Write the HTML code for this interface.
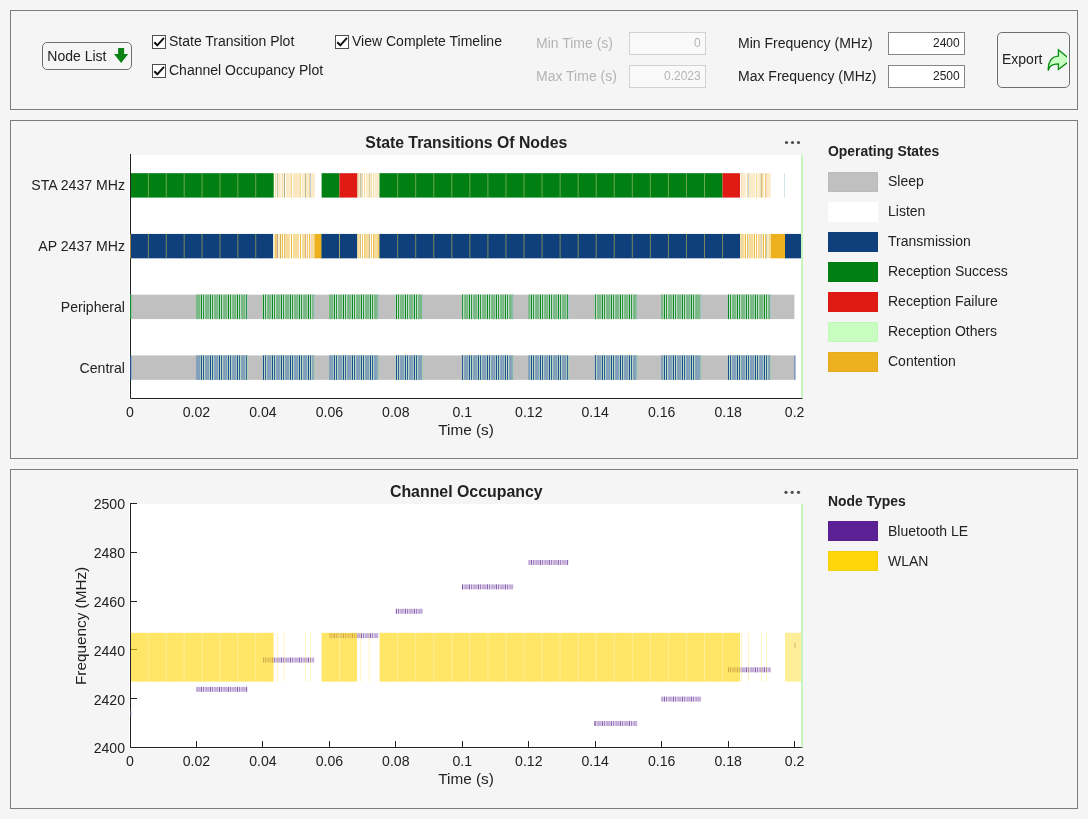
<!DOCTYPE html>
<html lang="en"><head><meta charset="utf-8"><title>Coexistence Visualization</title>
<style>
html,body{margin:0;padding:0;}
body{width:1088px;height:819px;background:#F5F5F5;font-family:"Liberation Sans", sans-serif;color:#212121;position:relative;overflow:hidden;}
.panel{position:absolute;left:10px;width:1066px;border:1px solid #7D7D7D;}
#p1{top:10px;height:98px;}
#p2{top:120px;height:337px;}
#p3{top:469px;height:338px;}
#wrap{position:absolute;left:0;top:0;width:1088px;height:819px;will-change:transform;}
.abs{position:absolute;}
.btn{position:absolute;box-sizing:border-box;border:1px solid #6E6E6E;border-radius:5px;font-size:14px;color:#212121;}
.lbl{position:absolute;font-size:14px;line-height:16px;white-space:nowrap;color:#212121;}
.dis{color:#B4B4B4;}
.cb{position:absolute;box-sizing:border-box;width:14px;height:14px;border:1px solid #4D4D4D;background:#fff;}
.cb svg{position:absolute;left:-1px;top:-1px;}
.inp{position:absolute;box-sizing:border-box;width:77px;height:23px;border:1px solid #858585;background:#fff;font-size:12px;line-height:21px;text-align:right;padding-right:4.3px;color:#212121;}
.inp.d{border-color:#D2D2D2;background:#F9F9F9;color:#B4B4B4;}
svg text{font-family:"Liberation Sans", sans-serif;}
svg.plot{position:absolute;left:0;top:0;}
</style></head><body>
<div id="wrap">
<div class="panel" id="p1"></div>
<div class="panel" id="p2"></div>
<div class="panel" id="p3"></div>

<div class="btn" style="left:42px;top:42px;width:90px;height:28px;"><span class="abs" style="left:4.3px;top:5px;line-height:16px;">Node List</span>
<svg class="abs" style="left:69px;top:4px" width="18" height="18" viewBox="112 47 18 18"><path d="M118.1 48 H124.1 V54.1 H128.2 L121.1 63 L114 54.1 H118.1 Z" fill="#0A8214"/></svg></div>

<div class="cb" style="left:152px;top:35px"><svg width="14" height="14" viewBox="152 35 14 14"><path d="M154.3 42.2 L157.3 45.3 L164 37.8" fill="none" stroke="#111" stroke-width="2"/></svg></div>
<div class="lbl" style="left:169px;top:33px">State Transition Plot</div>
<div class="cb" style="left:152px;top:64px"><svg width="14" height="14" viewBox="152 35 14 14"><path d="M154.3 42.2 L157.3 45.3 L164 37.8" fill="none" stroke="#111" stroke-width="2"/></svg></div>
<div class="lbl" style="left:169px;top:62px">Channel Occupancy Plot</div>
<div class="cb" style="left:335px;top:35px"><svg width="14" height="14" viewBox="152 35 14 14"><path d="M154.3 42.2 L157.3 45.3 L164 37.8" fill="none" stroke="#111" stroke-width="2"/></svg></div>
<div class="lbl" style="left:352px;top:33px">View Complete Timeline</div>

<div class="lbl dis" style="left:536px;top:35px">Min Time (s)</div>
<div class="lbl dis" style="left:536px;top:68px">Max Time (s)</div>
<div class="inp d" style="left:629px;top:32px">0</div>
<div class="inp d" style="left:629px;top:65px">0.2023</div>
<div class="lbl" style="left:738px;top:35px">Min Frequency (MHz)</div>
<div class="lbl" style="left:738px;top:68px">Max Frequency (MHz)</div>
<div class="inp" style="left:888px;top:32px">2400</div>
<div class="inp" style="left:888px;top:65px">2500</div>

<div class="btn" style="left:997px;top:32px;width:73px;height:56px;"><span class="abs" style="left:4px;top:17.5px;line-height:16px;">Export</span>
<svg class="abs" style="left:49px;top:15px" width="20" height="26" viewBox="1047 48 20 26"><path d="M1058.4 49.8 L1070.8 59.9 L1058.4 69.4 V63.9 C1053 63.9 1049 66 1048.3 70.7 C1047.6 62 1051.5 56.6 1058.4 56.2 Z" fill="#C8FFC0" stroke="#078A14" stroke-width="1.3" stroke-linejoin="miter"/></svg></div>

<svg class="plot" width="1088" height="819" viewBox="0 0 1088 819">
<defs>
<pattern id="pg" width="3" height="30" patternUnits="userSpaceOnUse" x="195.9">
<rect width="3" height="30" fill="#86C08E"/><rect x="0.2" width="0.9" height="30" fill="#0E8420"/><rect x="1.1" width="0.6" height="30" fill="#CFE8D0"/></pattern>
<pattern id="pb" width="3" height="30" patternUnits="userSpaceOnUse" x="195.9">
<rect width="3" height="30" fill="#8AA6C6"/><rect x="0.2" width="0.9" height="30" fill="#134484"/><rect x="1.1" width="0.6" height="30" fill="#C4E4C8"/></pattern>
<pattern id="pp" width="2" height="10" patternUnits="userSpaceOnUse" x="195.9">
<rect width="2" height="10" fill="#A87CD0"/><rect x="0" width="0.8" height="10" fill="#6A30A8"/></pattern>
</defs>
<rect x="129.00" y="155.00" width="674.00" height="244.50" fill="#FFFFFF"/>
<rect x="130.50" y="173.18" width="143.20" height="24.40" fill="#008012"/>
<rect x="147.89" y="173.18" width="1.00" height="24.40" fill="#6CA84C"/>
<rect x="165.78" y="173.18" width="1.00" height="24.40" fill="#6CA84C"/>
<rect x="183.67" y="173.18" width="1.00" height="24.40" fill="#6CA84C"/>
<rect x="201.56" y="173.18" width="1.00" height="24.40" fill="#6CA84C"/>
<rect x="219.45" y="173.18" width="1.00" height="24.40" fill="#6CA84C"/>
<rect x="237.34" y="173.18" width="1.00" height="24.40" fill="#6CA84C"/>
<rect x="255.23" y="173.18" width="1.00" height="24.40" fill="#6CA84C"/>
<rect x="274.90" y="173.18" width="1.10" height="24.40" fill="#F8DFA8"/>
<rect x="276.80" y="173.18" width="1.40" height="24.40" fill="#C4C8A4"/>
<rect x="278.20" y="173.18" width="2.60" height="24.40" fill="#FBEBC8"/>
<rect x="281.80" y="173.18" width="1.10" height="24.40" fill="#F6D88F"/>
<rect x="283.90" y="173.18" width="1.10" height="24.40" fill="#B0AE78"/>
<rect x="285.90" y="173.18" width="4.70" height="24.40" fill="#FBEBC8"/>
<rect x="290.60" y="173.18" width="1.40" height="24.40" fill="#F6D88F"/>
<rect x="293.00" y="173.18" width="6.70" height="24.40" fill="#FAE8C0"/>
<rect x="299.70" y="173.18" width="1.30" height="24.40" fill="#F6D88F"/>
<rect x="302.00" y="173.18" width="3.00" height="24.40" fill="#FBEBC8"/>
<rect x="305.00" y="173.18" width="1.00" height="24.40" fill="#B8BC98"/>
<rect x="306.00" y="173.18" width="2.80" height="24.40" fill="#FBEBC8"/>
<rect x="308.80" y="173.18" width="1.10" height="24.40" fill="#F6D88F"/>
<rect x="309.90" y="173.18" width="1.10" height="24.40" fill="#BCCCDC"/>
<rect x="311.00" y="173.18" width="3.90" height="24.40" fill="#FBEBC8"/>
<rect x="357.00" y="173.18" width="1.80" height="24.40" fill="#E0D0A8"/>
<rect x="358.80" y="173.18" width="1.20" height="24.40" fill="#FBEBC8"/>
<rect x="360.00" y="173.18" width="1.00" height="24.40" fill="#C8C8A0"/>
<rect x="361.00" y="173.18" width="1.00" height="24.40" fill="#D8D8D0"/>
<rect x="362.00" y="173.18" width="0.80" height="24.40" fill="#F6D88F"/>
<rect x="364.10" y="173.18" width="0.90" height="24.40" fill="#F6D88F"/>
<rect x="365.80" y="173.18" width="3.20" height="24.40" fill="#FBEBC8"/>
<rect x="369.00" y="173.18" width="0.90" height="24.40" fill="#C8D0A0"/>
<rect x="369.90" y="173.18" width="1.00" height="24.40" fill="#FBEBC8"/>
<rect x="370.90" y="173.18" width="0.90" height="24.40" fill="#F6D88F"/>
<rect x="373.10" y="173.18" width="0.80" height="24.40" fill="#F6D88F"/>
<rect x="374.00" y="173.18" width="1.00" height="24.40" fill="#FEF6E4"/>
<rect x="375.00" y="173.18" width="4.00" height="24.40" fill="#FBEBC8"/>
<rect x="379.00" y="173.18" width="0.70" height="24.40" fill="#B0DCA8"/>
<rect x="741.10" y="173.18" width="0.80" height="24.40" fill="#F8D0A0"/>
<rect x="742.00" y="173.18" width="3.60" height="24.40" fill="#FBEBC8"/>
<rect x="746.90" y="173.18" width="1.00" height="24.40" fill="#F6D88F"/>
<rect x="747.90" y="173.18" width="1.10" height="24.40" fill="#C8D8D8"/>
<rect x="749.00" y="173.18" width="5.80" height="24.40" fill="#FBEBC8"/>
<rect x="755.90" y="173.18" width="1.10" height="24.40" fill="#F6D88F"/>
<rect x="757.00" y="173.18" width="1.20" height="24.40" fill="#FEF6E4"/>
<rect x="758.20" y="173.18" width="2.50" height="24.40" fill="#FBEBC8"/>
<rect x="760.70" y="173.18" width="1.30" height="24.40" fill="#D0C080"/>
<rect x="762.00" y="173.18" width="1.60" height="24.40" fill="#F8E0A8"/>
<rect x="764.90" y="173.18" width="1.30" height="24.40" fill="#F6D080"/>
<rect x="766.20" y="173.18" width="0.80" height="24.40" fill="#F8D0C0"/>
<rect x="767.00" y="173.18" width="3.70" height="24.40" fill="#FBEBC8"/>
<rect x="784.00" y="173.18" width="1.00" height="24.40" fill="#D8E4EC"/>
<rect x="321.60" y="173.18" width="17.90" height="24.40" fill="#008012"/>
<rect x="339.50" y="173.18" width="17.60" height="24.40" fill="#E01B14"/>
<rect x="379.60" y="173.18" width="342.95" height="24.40" fill="#008012"/>
<rect x="397.15" y="173.18" width="1.00" height="24.40" fill="#6CA84C"/>
<rect x="415.20" y="173.18" width="1.00" height="24.40" fill="#6CA84C"/>
<rect x="433.25" y="173.18" width="1.00" height="24.40" fill="#6CA84C"/>
<rect x="451.30" y="173.18" width="1.00" height="24.40" fill="#6CA84C"/>
<rect x="469.35" y="173.18" width="1.00" height="24.40" fill="#6CA84C"/>
<rect x="487.40" y="173.18" width="1.00" height="24.40" fill="#6CA84C"/>
<rect x="505.45" y="173.18" width="1.00" height="24.40" fill="#6CA84C"/>
<rect x="523.50" y="173.18" width="1.00" height="24.40" fill="#6CA84C"/>
<rect x="541.55" y="173.18" width="1.00" height="24.40" fill="#6CA84C"/>
<rect x="559.60" y="173.18" width="1.00" height="24.40" fill="#6CA84C"/>
<rect x="577.65" y="173.18" width="1.00" height="24.40" fill="#6CA84C"/>
<rect x="595.70" y="173.18" width="1.00" height="24.40" fill="#6CA84C"/>
<rect x="613.75" y="173.18" width="1.00" height="24.40" fill="#6CA84C"/>
<rect x="631.80" y="173.18" width="1.00" height="24.40" fill="#6CA84C"/>
<rect x="649.85" y="173.18" width="1.00" height="24.40" fill="#6CA84C"/>
<rect x="667.90" y="173.18" width="1.00" height="24.40" fill="#6CA84C"/>
<rect x="685.95" y="173.18" width="1.00" height="24.40" fill="#6CA84C"/>
<rect x="704.00" y="173.18" width="1.00" height="24.40" fill="#6CA84C"/>
<rect x="722.55" y="173.18" width="17.45" height="24.40" fill="#E01B14"/>
<rect x="130.50" y="233.93" width="142.80" height="24.40" fill="#10407C"/>
<rect x="147.89" y="233.93" width="1.00" height="24.40" fill="#76885A"/>
<rect x="165.78" y="233.93" width="1.00" height="24.40" fill="#76885A"/>
<rect x="183.67" y="233.93" width="1.00" height="24.40" fill="#76885A"/>
<rect x="201.56" y="233.93" width="1.00" height="24.40" fill="#76885A"/>
<rect x="219.45" y="233.93" width="1.00" height="24.40" fill="#76885A"/>
<rect x="237.34" y="233.93" width="1.00" height="24.40" fill="#76885A"/>
<rect x="255.23" y="233.93" width="1.00" height="24.40" fill="#76885A"/>
<rect x="273.30" y="233.93" width="1.40" height="24.40" fill="#FDF4E0"/>
<rect x="274.70" y="233.93" width="2.10" height="24.40" fill="#F3C860"/>
<rect x="276.80" y="233.93" width="1.10" height="24.40" fill="#C0A080"/>
<rect x="278.00" y="233.93" width="1.90" height="24.40" fill="#FDF0C8"/>
<rect x="279.90" y="233.93" width="1.10" height="24.40" fill="#D8B050"/>
<rect x="281.80" y="233.93" width="1.20" height="24.40" fill="#EFBC44"/>
<rect x="284.00" y="233.93" width="1.10" height="24.40" fill="#E0C070"/>
<rect x="285.10" y="233.93" width="4.70" height="24.40" fill="#F6DC98"/>
<rect x="290.90" y="233.93" width="1.10" height="24.40" fill="#EFBC44"/>
<rect x="293.10" y="233.93" width="5.80" height="24.40" fill="#F6DC98"/>
<rect x="300.00" y="233.93" width="1.00" height="24.40" fill="#EFBC44"/>
<rect x="302.10" y="233.93" width="2.90" height="24.40" fill="#F6DC98"/>
<rect x="305.00" y="233.93" width="1.10" height="24.40" fill="#D8B090"/>
<rect x="306.90" y="233.93" width="0.90" height="24.40" fill="#EFBC44"/>
<rect x="308.90" y="233.93" width="1.00" height="24.40" fill="#EFBC44"/>
<rect x="310.00" y="233.93" width="1.00" height="24.40" fill="#F0E0E0"/>
<rect x="311.00" y="233.93" width="3.80" height="24.40" fill="#F6DC98"/>
<rect x="314.60" y="233.93" width="6.90" height="24.40" fill="#EDB120"/>
<rect x="357.00" y="233.93" width="3.00" height="24.40" fill="#FAE0A0"/>
<rect x="360.00" y="233.93" width="0.90" height="24.40" fill="#D0B878"/>
<rect x="362.00" y="233.93" width="0.80" height="24.40" fill="#EFBC44"/>
<rect x="364.10" y="233.93" width="0.90" height="24.40" fill="#F0C860"/>
<rect x="365.00" y="233.93" width="4.00" height="24.40" fill="#F6DC98"/>
<rect x="369.00" y="233.93" width="0.90" height="24.40" fill="#B8B090"/>
<rect x="370.90" y="233.93" width="0.90" height="24.40" fill="#EFBC44"/>
<rect x="373.10" y="233.93" width="0.90" height="24.40" fill="#EFBC44"/>
<rect x="374.00" y="233.93" width="4.00" height="24.40" fill="#F6DC98"/>
<rect x="378.00" y="233.93" width="1.00" height="24.40" fill="#F8C850"/>
<rect x="379.00" y="233.93" width="0.70" height="24.40" fill="#8C9468"/>
<rect x="740.00" y="233.93" width="1.10" height="24.40" fill="#FBE0A0"/>
<rect x="741.10" y="233.93" width="0.80" height="24.40" fill="#D8C8A0"/>
<rect x="742.00" y="233.93" width="2.00" height="24.40" fill="#F6DC98"/>
<rect x="744.00" y="233.93" width="1.00" height="24.40" fill="#FBEBC0"/>
<rect x="745.00" y="233.93" width="1.00" height="24.40" fill="#EFBC44"/>
<rect x="747.10" y="233.93" width="0.90" height="24.40" fill="#EFBC44"/>
<rect x="748.00" y="233.93" width="1.00" height="24.40" fill="#E0E0D8"/>
<rect x="749.00" y="233.93" width="4.00" height="24.40" fill="#F6DC98"/>
<rect x="753.00" y="233.93" width="1.00" height="24.40" fill="#FBEBC0"/>
<rect x="754.00" y="233.93" width="1.00" height="24.40" fill="#EFBC44"/>
<rect x="756.10" y="233.93" width="0.90" height="24.40" fill="#EFBC44"/>
<rect x="757.00" y="233.93" width="1.00" height="24.40" fill="#FEF6E4"/>
<rect x="758.00" y="233.93" width="2.70" height="24.40" fill="#F6DC98"/>
<rect x="760.70" y="233.93" width="1.20" height="24.40" fill="#D0C8B0"/>
<rect x="761.90" y="233.93" width="1.10" height="24.40" fill="#FBEBC0"/>
<rect x="763.00" y="233.93" width="1.00" height="24.40" fill="#EFBC44"/>
<rect x="765.10" y="233.93" width="1.00" height="24.40" fill="#EFBC44"/>
<rect x="766.10" y="233.93" width="0.90" height="24.40" fill="#C4C4BC"/>
<rect x="767.00" y="233.93" width="2.00" height="24.40" fill="#FAE8B8"/>
<rect x="769.00" y="233.93" width="2.00" height="24.40" fill="#F6DC98"/>
<rect x="771.00" y="233.93" width="14.00" height="24.40" fill="#EDB120"/>
<rect x="321.60" y="233.93" width="35.50" height="24.40" fill="#10407C"/>
<rect x="339.00" y="233.93" width="1.00" height="24.40" fill="#A0A860"/>
<rect x="321.10" y="233.93" width="0.80" height="24.40" fill="#607850"/>
<rect x="379.60" y="233.93" width="360.40" height="24.40" fill="#10407C"/>
<rect x="397.15" y="233.93" width="1.00" height="24.40" fill="#76885A"/>
<rect x="415.20" y="233.93" width="1.00" height="24.40" fill="#76885A"/>
<rect x="433.25" y="233.93" width="1.00" height="24.40" fill="#76885A"/>
<rect x="451.30" y="233.93" width="1.00" height="24.40" fill="#76885A"/>
<rect x="469.35" y="233.93" width="1.00" height="24.40" fill="#76885A"/>
<rect x="487.40" y="233.93" width="1.00" height="24.40" fill="#76885A"/>
<rect x="505.45" y="233.93" width="1.00" height="24.40" fill="#76885A"/>
<rect x="523.50" y="233.93" width="1.00" height="24.40" fill="#76885A"/>
<rect x="541.55" y="233.93" width="1.00" height="24.40" fill="#76885A"/>
<rect x="559.60" y="233.93" width="1.00" height="24.40" fill="#76885A"/>
<rect x="577.65" y="233.93" width="1.00" height="24.40" fill="#76885A"/>
<rect x="595.70" y="233.93" width="1.00" height="24.40" fill="#76885A"/>
<rect x="613.75" y="233.93" width="1.00" height="24.40" fill="#76885A"/>
<rect x="631.80" y="233.93" width="1.00" height="24.40" fill="#76885A"/>
<rect x="649.85" y="233.93" width="1.00" height="24.40" fill="#76885A"/>
<rect x="667.90" y="233.93" width="1.00" height="24.40" fill="#76885A"/>
<rect x="685.95" y="233.93" width="1.00" height="24.40" fill="#76885A"/>
<rect x="704.00" y="233.93" width="1.00" height="24.40" fill="#76885A"/>
<rect x="722.05" y="233.93" width="1.00" height="24.40" fill="#76885A"/>
<rect x="785.00" y="233.93" width="18.00" height="24.40" fill="#10407C"/>
<rect x="131.30" y="294.68" width="663.10" height="24.40" fill="#C0C0C0"/>
<rect x="195.90" y="294.68" width="51.50" height="24.40" fill="#82BC8C"/>
<rect x="197.06" y="294.68" width="0.70" height="24.40" fill="#6EB47C"/>
<rect x="198.86" y="294.68" width="0.70" height="24.40" fill="#6EB47C"/>
<rect x="206.10" y="294.68" width="0.70" height="24.40" fill="#6EB47C"/>
<rect x="207.90" y="294.68" width="0.70" height="24.40" fill="#6EB47C"/>
<rect x="200.50" y="294.68" width="2.20" height="24.40" fill="#D6E8DE"/>
<rect x="202.50" y="294.68" width="2.20" height="24.40" fill="#D6E8DE"/>
<rect x="201.00" y="294.68" width="1.00" height="24.40" fill="#0A8A1E"/>
<rect x="203.00" y="294.68" width="1.00" height="24.40" fill="#2A9638"/>
<rect x="215.14" y="294.68" width="0.70" height="24.40" fill="#6EB47C"/>
<rect x="216.94" y="294.68" width="0.70" height="24.40" fill="#6EB47C"/>
<rect x="209.50" y="294.68" width="2.20" height="24.40" fill="#D6E8DE"/>
<rect x="211.50" y="294.68" width="2.20" height="24.40" fill="#D6E8DE"/>
<rect x="210.00" y="294.68" width="1.00" height="24.40" fill="#0A8A1E"/>
<rect x="212.00" y="294.68" width="1.00" height="24.40" fill="#2A9638"/>
<rect x="224.18" y="294.68" width="0.70" height="24.40" fill="#6EB47C"/>
<rect x="225.98" y="294.68" width="0.70" height="24.40" fill="#6EB47C"/>
<rect x="218.50" y="294.68" width="2.20" height="24.40" fill="#D6E8DE"/>
<rect x="220.50" y="294.68" width="2.20" height="24.40" fill="#D6E8DE"/>
<rect x="219.00" y="294.68" width="1.00" height="24.40" fill="#0A8A1E"/>
<rect x="221.00" y="294.68" width="1.00" height="24.40" fill="#2A9638"/>
<rect x="233.22" y="294.68" width="0.70" height="24.40" fill="#6EB47C"/>
<rect x="235.02" y="294.68" width="0.70" height="24.40" fill="#6EB47C"/>
<rect x="227.50" y="294.68" width="2.20" height="24.40" fill="#D6E8DE"/>
<rect x="229.50" y="294.68" width="2.20" height="24.40" fill="#D6E8DE"/>
<rect x="228.00" y="294.68" width="1.00" height="24.40" fill="#0A8A1E"/>
<rect x="230.00" y="294.68" width="1.00" height="24.40" fill="#2A9638"/>
<rect x="242.26" y="294.68" width="0.70" height="24.40" fill="#6EB47C"/>
<rect x="244.06" y="294.68" width="0.70" height="24.40" fill="#6EB47C"/>
<rect x="236.50" y="294.68" width="2.20" height="24.40" fill="#D6E8DE"/>
<rect x="238.50" y="294.68" width="2.20" height="24.40" fill="#D6E8DE"/>
<rect x="237.00" y="294.68" width="1.00" height="24.40" fill="#0A8A1E"/>
<rect x="239.00" y="294.68" width="1.00" height="24.40" fill="#2A9638"/>
<rect x="245.50" y="294.68" width="1.90" height="24.40" fill="#D6E8DE"/>
<rect x="246.00" y="294.68" width="1.00" height="24.40" fill="#0A8A1E"/>
<rect x="246.80" y="294.68" width="0.90" height="24.40" fill="#B4C4D4"/>
<rect x="262.80" y="294.68" width="51.40" height="24.40" fill="#82BC8C"/>
<rect x="267.90" y="294.68" width="0.70" height="24.40" fill="#6EB47C"/>
<rect x="269.70" y="294.68" width="0.70" height="24.40" fill="#6EB47C"/>
<rect x="262.80" y="294.68" width="1.90" height="24.40" fill="#D6E8DE"/>
<rect x="264.50" y="294.68" width="2.20" height="24.40" fill="#D6E8DE"/>
<rect x="263.00" y="294.68" width="1.00" height="24.40" fill="#0A8A1E"/>
<rect x="265.00" y="294.68" width="1.00" height="24.40" fill="#2A9638"/>
<rect x="276.94" y="294.68" width="0.70" height="24.40" fill="#6EB47C"/>
<rect x="278.74" y="294.68" width="0.70" height="24.40" fill="#6EB47C"/>
<rect x="271.50" y="294.68" width="2.20" height="24.40" fill="#D6E8DE"/>
<rect x="273.50" y="294.68" width="2.20" height="24.40" fill="#D6E8DE"/>
<rect x="272.00" y="294.68" width="1.00" height="24.40" fill="#0A8A1E"/>
<rect x="274.00" y="294.68" width="1.00" height="24.40" fill="#2A9638"/>
<rect x="285.98" y="294.68" width="0.70" height="24.40" fill="#6EB47C"/>
<rect x="287.78" y="294.68" width="0.70" height="24.40" fill="#6EB47C"/>
<rect x="280.50" y="294.68" width="2.20" height="24.40" fill="#D6E8DE"/>
<rect x="282.50" y="294.68" width="2.20" height="24.40" fill="#D6E8DE"/>
<rect x="281.00" y="294.68" width="1.00" height="24.40" fill="#0A8A1E"/>
<rect x="283.00" y="294.68" width="1.00" height="24.40" fill="#2A9638"/>
<rect x="295.02" y="294.68" width="0.70" height="24.40" fill="#6EB47C"/>
<rect x="296.82" y="294.68" width="0.70" height="24.40" fill="#6EB47C"/>
<rect x="289.50" y="294.68" width="2.20" height="24.40" fill="#D6E8DE"/>
<rect x="291.50" y="294.68" width="2.20" height="24.40" fill="#D6E8DE"/>
<rect x="290.00" y="294.68" width="1.00" height="24.40" fill="#0A8A1E"/>
<rect x="292.00" y="294.68" width="1.00" height="24.40" fill="#2A9638"/>
<rect x="304.06" y="294.68" width="0.70" height="24.40" fill="#6EB47C"/>
<rect x="305.86" y="294.68" width="0.70" height="24.40" fill="#6EB47C"/>
<rect x="298.50" y="294.68" width="2.20" height="24.40" fill="#D6E8DE"/>
<rect x="300.50" y="294.68" width="2.20" height="24.40" fill="#D6E8DE"/>
<rect x="299.00" y="294.68" width="1.00" height="24.40" fill="#0A8A1E"/>
<rect x="301.00" y="294.68" width="1.00" height="24.40" fill="#2A9638"/>
<rect x="313.10" y="294.68" width="0.70" height="24.40" fill="#6EB47C"/>
<rect x="307.50" y="294.68" width="2.20" height="24.40" fill="#D6E8DE"/>
<rect x="309.50" y="294.68" width="2.20" height="24.40" fill="#D6E8DE"/>
<rect x="308.00" y="294.68" width="1.00" height="24.40" fill="#0A8A1E"/>
<rect x="310.00" y="294.68" width="1.00" height="24.40" fill="#2A9638"/>
<rect x="313.60" y="294.68" width="0.90" height="24.40" fill="#B4C4D4"/>
<rect x="329.00" y="294.68" width="49.30" height="24.40" fill="#82BC8C"/>
<rect x="329.91" y="294.68" width="0.70" height="24.40" fill="#6EB47C"/>
<rect x="331.71" y="294.68" width="0.70" height="24.40" fill="#6EB47C"/>
<rect x="338.95" y="294.68" width="0.70" height="24.40" fill="#6EB47C"/>
<rect x="340.75" y="294.68" width="0.70" height="24.40" fill="#6EB47C"/>
<rect x="333.50" y="294.68" width="2.20" height="24.40" fill="#D6E8DE"/>
<rect x="335.50" y="294.68" width="2.20" height="24.40" fill="#D6E8DE"/>
<rect x="334.00" y="294.68" width="1.00" height="24.40" fill="#0A8A1E"/>
<rect x="336.00" y="294.68" width="1.00" height="24.40" fill="#2A9638"/>
<rect x="347.99" y="294.68" width="0.70" height="24.40" fill="#6EB47C"/>
<rect x="349.79" y="294.68" width="0.70" height="24.40" fill="#6EB47C"/>
<rect x="342.50" y="294.68" width="2.20" height="24.40" fill="#D6E8DE"/>
<rect x="344.50" y="294.68" width="2.20" height="24.40" fill="#D6E8DE"/>
<rect x="343.00" y="294.68" width="1.00" height="24.40" fill="#0A8A1E"/>
<rect x="345.00" y="294.68" width="1.00" height="24.40" fill="#2A9638"/>
<rect x="357.03" y="294.68" width="0.70" height="24.40" fill="#6EB47C"/>
<rect x="358.83" y="294.68" width="0.70" height="24.40" fill="#6EB47C"/>
<rect x="351.50" y="294.68" width="2.20" height="24.40" fill="#D6E8DE"/>
<rect x="353.50" y="294.68" width="2.20" height="24.40" fill="#D6E8DE"/>
<rect x="352.00" y="294.68" width="1.00" height="24.40" fill="#0A8A1E"/>
<rect x="354.00" y="294.68" width="1.00" height="24.40" fill="#2A9638"/>
<rect x="366.07" y="294.68" width="0.70" height="24.40" fill="#6EB47C"/>
<rect x="367.87" y="294.68" width="0.70" height="24.40" fill="#6EB47C"/>
<rect x="360.50" y="294.68" width="2.20" height="24.40" fill="#D6E8DE"/>
<rect x="362.50" y="294.68" width="2.20" height="24.40" fill="#D6E8DE"/>
<rect x="361.00" y="294.68" width="1.00" height="24.40" fill="#0A8A1E"/>
<rect x="363.00" y="294.68" width="1.00" height="24.40" fill="#2A9638"/>
<rect x="375.11" y="294.68" width="0.70" height="24.40" fill="#6EB47C"/>
<rect x="376.91" y="294.68" width="0.70" height="24.40" fill="#6EB47C"/>
<rect x="369.50" y="294.68" width="2.20" height="24.40" fill="#D6E8DE"/>
<rect x="371.50" y="294.68" width="2.20" height="24.40" fill="#D6E8DE"/>
<rect x="370.00" y="294.68" width="1.00" height="24.40" fill="#0A8A1E"/>
<rect x="372.00" y="294.68" width="1.00" height="24.40" fill="#2A9638"/>
<rect x="377.70" y="294.68" width="0.90" height="24.40" fill="#B4C4D4"/>
<rect x="395.50" y="294.68" width="27.20" height="24.40" fill="#82BC8C"/>
<rect x="400.80" y="294.68" width="0.70" height="24.40" fill="#6EB47C"/>
<rect x="402.60" y="294.68" width="0.70" height="24.40" fill="#6EB47C"/>
<rect x="395.50" y="294.68" width="2.20" height="24.40" fill="#D6E8DE"/>
<rect x="397.50" y="294.68" width="2.20" height="24.40" fill="#D6E8DE"/>
<rect x="396.00" y="294.68" width="1.00" height="24.40" fill="#0A8A1E"/>
<rect x="398.00" y="294.68" width="1.00" height="24.40" fill="#2A9638"/>
<rect x="409.84" y="294.68" width="0.70" height="24.40" fill="#6EB47C"/>
<rect x="411.64" y="294.68" width="0.70" height="24.40" fill="#6EB47C"/>
<rect x="404.50" y="294.68" width="2.20" height="24.40" fill="#D6E8DE"/>
<rect x="406.50" y="294.68" width="2.20" height="24.40" fill="#D6E8DE"/>
<rect x="405.00" y="294.68" width="1.00" height="24.40" fill="#0A8A1E"/>
<rect x="407.00" y="294.68" width="1.00" height="24.40" fill="#2A9638"/>
<rect x="418.88" y="294.68" width="0.70" height="24.40" fill="#6EB47C"/>
<rect x="420.68" y="294.68" width="0.70" height="24.40" fill="#6EB47C"/>
<rect x="413.50" y="294.68" width="2.20" height="24.40" fill="#D6E8DE"/>
<rect x="415.50" y="294.68" width="2.20" height="24.40" fill="#D6E8DE"/>
<rect x="414.00" y="294.68" width="1.00" height="24.40" fill="#0A8A1E"/>
<rect x="416.00" y="294.68" width="1.00" height="24.40" fill="#2A9638"/>
<rect x="422.10" y="294.68" width="0.90" height="24.40" fill="#B4C4D4"/>
<rect x="462.10" y="294.68" width="51.10" height="24.40" fill="#82BC8C"/>
<rect x="465.06" y="294.68" width="0.70" height="24.40" fill="#6EB47C"/>
<rect x="466.86" y="294.68" width="0.70" height="24.40" fill="#6EB47C"/>
<rect x="462.10" y="294.68" width="1.60" height="24.40" fill="#D6E8DE"/>
<rect x="462.00" y="294.68" width="1.00" height="24.40" fill="#2A9638"/>
<rect x="474.10" y="294.68" width="0.70" height="24.40" fill="#6EB47C"/>
<rect x="475.90" y="294.68" width="0.70" height="24.40" fill="#6EB47C"/>
<rect x="468.50" y="294.68" width="2.20" height="24.40" fill="#D6E8DE"/>
<rect x="470.50" y="294.68" width="2.20" height="24.40" fill="#D6E8DE"/>
<rect x="469.00" y="294.68" width="1.00" height="24.40" fill="#0A8A1E"/>
<rect x="471.00" y="294.68" width="1.00" height="24.40" fill="#2A9638"/>
<rect x="483.14" y="294.68" width="0.70" height="24.40" fill="#6EB47C"/>
<rect x="484.94" y="294.68" width="0.70" height="24.40" fill="#6EB47C"/>
<rect x="477.50" y="294.68" width="2.20" height="24.40" fill="#D6E8DE"/>
<rect x="479.50" y="294.68" width="2.20" height="24.40" fill="#D6E8DE"/>
<rect x="478.00" y="294.68" width="1.00" height="24.40" fill="#0A8A1E"/>
<rect x="480.00" y="294.68" width="1.00" height="24.40" fill="#2A9638"/>
<rect x="492.18" y="294.68" width="0.70" height="24.40" fill="#6EB47C"/>
<rect x="493.98" y="294.68" width="0.70" height="24.40" fill="#6EB47C"/>
<rect x="486.50" y="294.68" width="2.20" height="24.40" fill="#D6E8DE"/>
<rect x="488.50" y="294.68" width="2.20" height="24.40" fill="#D6E8DE"/>
<rect x="487.00" y="294.68" width="1.00" height="24.40" fill="#0A8A1E"/>
<rect x="489.00" y="294.68" width="1.00" height="24.40" fill="#2A9638"/>
<rect x="501.22" y="294.68" width="0.70" height="24.40" fill="#6EB47C"/>
<rect x="503.02" y="294.68" width="0.70" height="24.40" fill="#6EB47C"/>
<rect x="495.50" y="294.68" width="2.20" height="24.40" fill="#D6E8DE"/>
<rect x="497.50" y="294.68" width="2.20" height="24.40" fill="#D6E8DE"/>
<rect x="496.00" y="294.68" width="1.00" height="24.40" fill="#0A8A1E"/>
<rect x="498.00" y="294.68" width="1.00" height="24.40" fill="#2A9638"/>
<rect x="510.26" y="294.68" width="0.70" height="24.40" fill="#6EB47C"/>
<rect x="512.06" y="294.68" width="0.70" height="24.40" fill="#6EB47C"/>
<rect x="504.50" y="294.68" width="2.20" height="24.40" fill="#D6E8DE"/>
<rect x="506.50" y="294.68" width="2.20" height="24.40" fill="#D6E8DE"/>
<rect x="505.00" y="294.68" width="1.00" height="24.40" fill="#0A8A1E"/>
<rect x="507.00" y="294.68" width="1.00" height="24.40" fill="#2A9638"/>
<rect x="462.00" y="294.68" width="1.00" height="24.40" fill="#2A9638"/>
<rect x="512.60" y="294.68" width="0.90" height="24.40" fill="#B4C4D4"/>
<rect x="528.20" y="294.68" width="40.20" height="24.40" fill="#82BC8C"/>
<rect x="528.86" y="294.68" width="0.70" height="24.40" fill="#6EB47C"/>
<rect x="536.10" y="294.68" width="0.70" height="24.40" fill="#6EB47C"/>
<rect x="537.90" y="294.68" width="0.70" height="24.40" fill="#6EB47C"/>
<rect x="530.50" y="294.68" width="2.20" height="24.40" fill="#D6E8DE"/>
<rect x="532.50" y="294.68" width="2.20" height="24.40" fill="#D6E8DE"/>
<rect x="531.00" y="294.68" width="1.00" height="24.40" fill="#0A8A1E"/>
<rect x="533.00" y="294.68" width="1.00" height="24.40" fill="#2A9638"/>
<rect x="545.14" y="294.68" width="0.70" height="24.40" fill="#6EB47C"/>
<rect x="546.94" y="294.68" width="0.70" height="24.40" fill="#6EB47C"/>
<rect x="539.50" y="294.68" width="2.20" height="24.40" fill="#D6E8DE"/>
<rect x="541.50" y="294.68" width="2.20" height="24.40" fill="#D6E8DE"/>
<rect x="540.00" y="294.68" width="1.00" height="24.40" fill="#0A8A1E"/>
<rect x="542.00" y="294.68" width="1.00" height="24.40" fill="#2A9638"/>
<rect x="554.18" y="294.68" width="0.70" height="24.40" fill="#6EB47C"/>
<rect x="555.98" y="294.68" width="0.70" height="24.40" fill="#6EB47C"/>
<rect x="548.50" y="294.68" width="2.20" height="24.40" fill="#D6E8DE"/>
<rect x="550.50" y="294.68" width="2.20" height="24.40" fill="#D6E8DE"/>
<rect x="549.00" y="294.68" width="1.00" height="24.40" fill="#0A8A1E"/>
<rect x="551.00" y="294.68" width="1.00" height="24.40" fill="#2A9638"/>
<rect x="563.22" y="294.68" width="0.70" height="24.40" fill="#6EB47C"/>
<rect x="565.02" y="294.68" width="0.70" height="24.40" fill="#6EB47C"/>
<rect x="557.50" y="294.68" width="2.20" height="24.40" fill="#D6E8DE"/>
<rect x="559.50" y="294.68" width="2.20" height="24.40" fill="#D6E8DE"/>
<rect x="558.00" y="294.68" width="1.00" height="24.40" fill="#0A8A1E"/>
<rect x="560.00" y="294.68" width="1.00" height="24.40" fill="#2A9638"/>
<rect x="566.50" y="294.68" width="1.90" height="24.40" fill="#D6E8DE"/>
<rect x="567.00" y="294.68" width="1.00" height="24.40" fill="#0A8A1E"/>
<rect x="567.80" y="294.68" width="0.90" height="24.40" fill="#B4C4D4"/>
<rect x="594.80" y="294.68" width="42.30" height="24.40" fill="#82BC8C"/>
<rect x="597.86" y="294.68" width="0.70" height="24.40" fill="#6EB47C"/>
<rect x="599.66" y="294.68" width="0.70" height="24.40" fill="#6EB47C"/>
<rect x="594.80" y="294.68" width="1.90" height="24.40" fill="#D6E8DE"/>
<rect x="595.00" y="294.68" width="1.00" height="24.40" fill="#2A9638"/>
<rect x="606.90" y="294.68" width="0.70" height="24.40" fill="#6EB47C"/>
<rect x="608.70" y="294.68" width="0.70" height="24.40" fill="#6EB47C"/>
<rect x="601.50" y="294.68" width="2.20" height="24.40" fill="#D6E8DE"/>
<rect x="603.50" y="294.68" width="2.20" height="24.40" fill="#D6E8DE"/>
<rect x="602.00" y="294.68" width="1.00" height="24.40" fill="#0A8A1E"/>
<rect x="604.00" y="294.68" width="1.00" height="24.40" fill="#2A9638"/>
<rect x="615.94" y="294.68" width="0.70" height="24.40" fill="#6EB47C"/>
<rect x="617.74" y="294.68" width="0.70" height="24.40" fill="#6EB47C"/>
<rect x="610.50" y="294.68" width="2.20" height="24.40" fill="#D6E8DE"/>
<rect x="612.50" y="294.68" width="2.20" height="24.40" fill="#D6E8DE"/>
<rect x="611.00" y="294.68" width="1.00" height="24.40" fill="#0A8A1E"/>
<rect x="613.00" y="294.68" width="1.00" height="24.40" fill="#2A9638"/>
<rect x="624.98" y="294.68" width="0.70" height="24.40" fill="#6EB47C"/>
<rect x="626.78" y="294.68" width="0.70" height="24.40" fill="#6EB47C"/>
<rect x="619.50" y="294.68" width="2.20" height="24.40" fill="#D6E8DE"/>
<rect x="621.50" y="294.68" width="2.20" height="24.40" fill="#D6E8DE"/>
<rect x="620.00" y="294.68" width="1.00" height="24.40" fill="#0A8A1E"/>
<rect x="622.00" y="294.68" width="1.00" height="24.40" fill="#2A9638"/>
<rect x="634.02" y="294.68" width="0.70" height="24.40" fill="#6EB47C"/>
<rect x="635.82" y="294.68" width="0.70" height="24.40" fill="#6EB47C"/>
<rect x="628.50" y="294.68" width="2.20" height="24.40" fill="#D6E8DE"/>
<rect x="630.50" y="294.68" width="2.20" height="24.40" fill="#D6E8DE"/>
<rect x="629.00" y="294.68" width="1.00" height="24.40" fill="#0A8A1E"/>
<rect x="631.00" y="294.68" width="1.00" height="24.40" fill="#2A9638"/>
<rect x="595.00" y="294.68" width="1.00" height="24.40" fill="#2A9638"/>
<rect x="636.50" y="294.68" width="0.90" height="24.40" fill="#B4C4D4"/>
<rect x="661.00" y="294.68" width="40.10" height="24.40" fill="#82BC8C"/>
<rect x="661.76" y="294.68" width="0.70" height="24.40" fill="#6EB47C"/>
<rect x="669.00" y="294.68" width="0.70" height="24.40" fill="#6EB47C"/>
<rect x="670.80" y="294.68" width="0.70" height="24.40" fill="#6EB47C"/>
<rect x="663.50" y="294.68" width="2.20" height="24.40" fill="#D6E8DE"/>
<rect x="665.50" y="294.68" width="2.20" height="24.40" fill="#D6E8DE"/>
<rect x="664.00" y="294.68" width="1.00" height="24.40" fill="#0A8A1E"/>
<rect x="666.00" y="294.68" width="1.00" height="24.40" fill="#2A9638"/>
<rect x="678.04" y="294.68" width="0.70" height="24.40" fill="#6EB47C"/>
<rect x="679.84" y="294.68" width="0.70" height="24.40" fill="#6EB47C"/>
<rect x="672.50" y="294.68" width="2.20" height="24.40" fill="#D6E8DE"/>
<rect x="674.50" y="294.68" width="2.20" height="24.40" fill="#D6E8DE"/>
<rect x="673.00" y="294.68" width="1.00" height="24.40" fill="#0A8A1E"/>
<rect x="675.00" y="294.68" width="1.00" height="24.40" fill="#2A9638"/>
<rect x="687.08" y="294.68" width="0.70" height="24.40" fill="#6EB47C"/>
<rect x="688.88" y="294.68" width="0.70" height="24.40" fill="#6EB47C"/>
<rect x="681.50" y="294.68" width="2.20" height="24.40" fill="#D6E8DE"/>
<rect x="683.50" y="294.68" width="2.20" height="24.40" fill="#D6E8DE"/>
<rect x="682.00" y="294.68" width="1.00" height="24.40" fill="#0A8A1E"/>
<rect x="684.00" y="294.68" width="1.00" height="24.40" fill="#2A9638"/>
<rect x="696.12" y="294.68" width="0.70" height="24.40" fill="#6EB47C"/>
<rect x="697.92" y="294.68" width="0.70" height="24.40" fill="#6EB47C"/>
<rect x="690.50" y="294.68" width="2.20" height="24.40" fill="#D6E8DE"/>
<rect x="692.50" y="294.68" width="2.20" height="24.40" fill="#D6E8DE"/>
<rect x="691.00" y="294.68" width="1.00" height="24.40" fill="#0A8A1E"/>
<rect x="693.00" y="294.68" width="1.00" height="24.40" fill="#2A9638"/>
<rect x="700.50" y="294.68" width="0.90" height="24.40" fill="#B4C4D4"/>
<rect x="727.80" y="294.68" width="43.00" height="24.40" fill="#82BC8C"/>
<rect x="732.90" y="294.68" width="0.70" height="24.40" fill="#6EB47C"/>
<rect x="734.70" y="294.68" width="0.70" height="24.40" fill="#6EB47C"/>
<rect x="727.80" y="294.68" width="1.90" height="24.40" fill="#D6E8DE"/>
<rect x="729.50" y="294.68" width="2.20" height="24.40" fill="#D6E8DE"/>
<rect x="728.00" y="294.68" width="1.00" height="24.40" fill="#0A8A1E"/>
<rect x="730.00" y="294.68" width="1.00" height="24.40" fill="#2A9638"/>
<rect x="741.94" y="294.68" width="0.70" height="24.40" fill="#6EB47C"/>
<rect x="743.74" y="294.68" width="0.70" height="24.40" fill="#6EB47C"/>
<rect x="736.50" y="294.68" width="2.20" height="24.40" fill="#D6E8DE"/>
<rect x="738.50" y="294.68" width="2.20" height="24.40" fill="#D6E8DE"/>
<rect x="737.00" y="294.68" width="1.00" height="24.40" fill="#0A8A1E"/>
<rect x="739.00" y="294.68" width="1.00" height="24.40" fill="#2A9638"/>
<rect x="750.98" y="294.68" width="0.70" height="24.40" fill="#6EB47C"/>
<rect x="752.78" y="294.68" width="0.70" height="24.40" fill="#6EB47C"/>
<rect x="745.50" y="294.68" width="2.20" height="24.40" fill="#D6E8DE"/>
<rect x="747.50" y="294.68" width="2.20" height="24.40" fill="#D6E8DE"/>
<rect x="746.00" y="294.68" width="1.00" height="24.40" fill="#0A8A1E"/>
<rect x="748.00" y="294.68" width="1.00" height="24.40" fill="#2A9638"/>
<rect x="760.02" y="294.68" width="0.70" height="24.40" fill="#6EB47C"/>
<rect x="761.82" y="294.68" width="0.70" height="24.40" fill="#6EB47C"/>
<rect x="754.50" y="294.68" width="2.20" height="24.40" fill="#D6E8DE"/>
<rect x="756.50" y="294.68" width="2.20" height="24.40" fill="#D6E8DE"/>
<rect x="755.00" y="294.68" width="1.00" height="24.40" fill="#0A8A1E"/>
<rect x="757.00" y="294.68" width="1.00" height="24.40" fill="#2A9638"/>
<rect x="769.06" y="294.68" width="0.70" height="24.40" fill="#6EB47C"/>
<rect x="763.50" y="294.68" width="2.20" height="24.40" fill="#D6E8DE"/>
<rect x="765.50" y="294.68" width="2.20" height="24.40" fill="#D6E8DE"/>
<rect x="764.00" y="294.68" width="1.00" height="24.40" fill="#0A8A1E"/>
<rect x="766.00" y="294.68" width="1.00" height="24.40" fill="#2A9638"/>
<rect x="770.20" y="294.68" width="0.90" height="24.40" fill="#B4C4D4"/>
<rect x="131.30" y="355.43" width="663.10" height="24.40" fill="#C0C0C0"/>
<rect x="195.90" y="355.43" width="51.50" height="24.40" fill="#88A6B6"/>
<rect x="197.06" y="355.43" width="0.70" height="24.40" fill="#7C98C2"/>
<rect x="198.86" y="355.43" width="0.70" height="24.40" fill="#7C98C2"/>
<rect x="206.10" y="355.43" width="0.70" height="24.40" fill="#7C98C2"/>
<rect x="207.90" y="355.43" width="0.70" height="24.40" fill="#7C98C2"/>
<rect x="200.50" y="355.43" width="2.20" height="24.40" fill="#CCE8CC"/>
<rect x="202.50" y="355.43" width="2.20" height="24.40" fill="#CCE8CC"/>
<rect x="201.00" y="355.43" width="1.00" height="24.40" fill="#1A4E8C"/>
<rect x="203.00" y="355.43" width="1.00" height="24.40" fill="#2C5C96"/>
<rect x="215.14" y="355.43" width="0.70" height="24.40" fill="#7C98C2"/>
<rect x="216.94" y="355.43" width="0.70" height="24.40" fill="#7C98C2"/>
<rect x="209.50" y="355.43" width="2.20" height="24.40" fill="#CCE8CC"/>
<rect x="211.50" y="355.43" width="2.20" height="24.40" fill="#CCE8CC"/>
<rect x="210.00" y="355.43" width="1.00" height="24.40" fill="#1A4E8C"/>
<rect x="212.00" y="355.43" width="1.00" height="24.40" fill="#2C5C96"/>
<rect x="224.18" y="355.43" width="0.70" height="24.40" fill="#7C98C2"/>
<rect x="225.98" y="355.43" width="0.70" height="24.40" fill="#7C98C2"/>
<rect x="218.50" y="355.43" width="2.20" height="24.40" fill="#CCE8CC"/>
<rect x="220.50" y="355.43" width="2.20" height="24.40" fill="#CCE8CC"/>
<rect x="219.00" y="355.43" width="1.00" height="24.40" fill="#1A4E8C"/>
<rect x="221.00" y="355.43" width="1.00" height="24.40" fill="#2C5C96"/>
<rect x="233.22" y="355.43" width="0.70" height="24.40" fill="#7C98C2"/>
<rect x="235.02" y="355.43" width="0.70" height="24.40" fill="#7C98C2"/>
<rect x="227.50" y="355.43" width="2.20" height="24.40" fill="#CCE8CC"/>
<rect x="229.50" y="355.43" width="2.20" height="24.40" fill="#CCE8CC"/>
<rect x="228.00" y="355.43" width="1.00" height="24.40" fill="#1A4E8C"/>
<rect x="230.00" y="355.43" width="1.00" height="24.40" fill="#2C5C96"/>
<rect x="242.26" y="355.43" width="0.70" height="24.40" fill="#7C98C2"/>
<rect x="244.06" y="355.43" width="0.70" height="24.40" fill="#7C98C2"/>
<rect x="236.50" y="355.43" width="2.20" height="24.40" fill="#CCE8CC"/>
<rect x="238.50" y="355.43" width="2.20" height="24.40" fill="#CCE8CC"/>
<rect x="237.00" y="355.43" width="1.00" height="24.40" fill="#1A4E8C"/>
<rect x="239.00" y="355.43" width="1.00" height="24.40" fill="#2C5C96"/>
<rect x="245.50" y="355.43" width="1.90" height="24.40" fill="#CCE8CC"/>
<rect x="246.00" y="355.43" width="1.00" height="24.40" fill="#1A4E8C"/>
<rect x="246.80" y="355.43" width="0.90" height="24.40" fill="#A8D4B0"/>
<rect x="262.80" y="355.43" width="51.40" height="24.40" fill="#88A6B6"/>
<rect x="267.90" y="355.43" width="0.70" height="24.40" fill="#7C98C2"/>
<rect x="269.70" y="355.43" width="0.70" height="24.40" fill="#7C98C2"/>
<rect x="262.80" y="355.43" width="1.90" height="24.40" fill="#CCE8CC"/>
<rect x="264.50" y="355.43" width="2.20" height="24.40" fill="#CCE8CC"/>
<rect x="263.00" y="355.43" width="1.00" height="24.40" fill="#1A4E8C"/>
<rect x="265.00" y="355.43" width="1.00" height="24.40" fill="#2C5C96"/>
<rect x="276.94" y="355.43" width="0.70" height="24.40" fill="#7C98C2"/>
<rect x="278.74" y="355.43" width="0.70" height="24.40" fill="#7C98C2"/>
<rect x="271.50" y="355.43" width="2.20" height="24.40" fill="#CCE8CC"/>
<rect x="273.50" y="355.43" width="2.20" height="24.40" fill="#CCE8CC"/>
<rect x="272.00" y="355.43" width="1.00" height="24.40" fill="#1A4E8C"/>
<rect x="274.00" y="355.43" width="1.00" height="24.40" fill="#2C5C96"/>
<rect x="285.98" y="355.43" width="0.70" height="24.40" fill="#7C98C2"/>
<rect x="287.78" y="355.43" width="0.70" height="24.40" fill="#7C98C2"/>
<rect x="280.50" y="355.43" width="2.20" height="24.40" fill="#CCE8CC"/>
<rect x="282.50" y="355.43" width="2.20" height="24.40" fill="#CCE8CC"/>
<rect x="281.00" y="355.43" width="1.00" height="24.40" fill="#1A4E8C"/>
<rect x="283.00" y="355.43" width="1.00" height="24.40" fill="#2C5C96"/>
<rect x="295.02" y="355.43" width="0.70" height="24.40" fill="#7C98C2"/>
<rect x="296.82" y="355.43" width="0.70" height="24.40" fill="#7C98C2"/>
<rect x="289.50" y="355.43" width="2.20" height="24.40" fill="#CCE8CC"/>
<rect x="291.50" y="355.43" width="2.20" height="24.40" fill="#CCE8CC"/>
<rect x="290.00" y="355.43" width="1.00" height="24.40" fill="#1A4E8C"/>
<rect x="292.00" y="355.43" width="1.00" height="24.40" fill="#2C5C96"/>
<rect x="304.06" y="355.43" width="0.70" height="24.40" fill="#7C98C2"/>
<rect x="305.86" y="355.43" width="0.70" height="24.40" fill="#7C98C2"/>
<rect x="298.50" y="355.43" width="2.20" height="24.40" fill="#CCE8CC"/>
<rect x="300.50" y="355.43" width="2.20" height="24.40" fill="#CCE8CC"/>
<rect x="299.00" y="355.43" width="1.00" height="24.40" fill="#1A4E8C"/>
<rect x="301.00" y="355.43" width="1.00" height="24.40" fill="#2C5C96"/>
<rect x="313.10" y="355.43" width="0.70" height="24.40" fill="#7C98C2"/>
<rect x="307.50" y="355.43" width="2.20" height="24.40" fill="#CCE8CC"/>
<rect x="309.50" y="355.43" width="2.20" height="24.40" fill="#CCE8CC"/>
<rect x="308.00" y="355.43" width="1.00" height="24.40" fill="#1A4E8C"/>
<rect x="310.00" y="355.43" width="1.00" height="24.40" fill="#2C5C96"/>
<rect x="313.60" y="355.43" width="0.90" height="24.40" fill="#A8D4B0"/>
<rect x="329.00" y="355.43" width="49.30" height="24.40" fill="#88A6B6"/>
<rect x="329.91" y="355.43" width="0.70" height="24.40" fill="#7C98C2"/>
<rect x="331.71" y="355.43" width="0.70" height="24.40" fill="#7C98C2"/>
<rect x="338.95" y="355.43" width="0.70" height="24.40" fill="#7C98C2"/>
<rect x="340.75" y="355.43" width="0.70" height="24.40" fill="#7C98C2"/>
<rect x="333.50" y="355.43" width="2.20" height="24.40" fill="#CCE8CC"/>
<rect x="335.50" y="355.43" width="2.20" height="24.40" fill="#CCE8CC"/>
<rect x="334.00" y="355.43" width="1.00" height="24.40" fill="#1A4E8C"/>
<rect x="336.00" y="355.43" width="1.00" height="24.40" fill="#2C5C96"/>
<rect x="347.99" y="355.43" width="0.70" height="24.40" fill="#7C98C2"/>
<rect x="349.79" y="355.43" width="0.70" height="24.40" fill="#7C98C2"/>
<rect x="342.50" y="355.43" width="2.20" height="24.40" fill="#CCE8CC"/>
<rect x="344.50" y="355.43" width="2.20" height="24.40" fill="#CCE8CC"/>
<rect x="343.00" y="355.43" width="1.00" height="24.40" fill="#1A4E8C"/>
<rect x="345.00" y="355.43" width="1.00" height="24.40" fill="#2C5C96"/>
<rect x="357.03" y="355.43" width="0.70" height="24.40" fill="#7C98C2"/>
<rect x="358.83" y="355.43" width="0.70" height="24.40" fill="#7C98C2"/>
<rect x="351.50" y="355.43" width="2.20" height="24.40" fill="#CCE8CC"/>
<rect x="353.50" y="355.43" width="2.20" height="24.40" fill="#CCE8CC"/>
<rect x="352.00" y="355.43" width="1.00" height="24.40" fill="#1A4E8C"/>
<rect x="354.00" y="355.43" width="1.00" height="24.40" fill="#2C5C96"/>
<rect x="366.07" y="355.43" width="0.70" height="24.40" fill="#7C98C2"/>
<rect x="367.87" y="355.43" width="0.70" height="24.40" fill="#7C98C2"/>
<rect x="360.50" y="355.43" width="2.20" height="24.40" fill="#CCE8CC"/>
<rect x="362.50" y="355.43" width="2.20" height="24.40" fill="#CCE8CC"/>
<rect x="361.00" y="355.43" width="1.00" height="24.40" fill="#1A4E8C"/>
<rect x="363.00" y="355.43" width="1.00" height="24.40" fill="#2C5C96"/>
<rect x="375.11" y="355.43" width="0.70" height="24.40" fill="#7C98C2"/>
<rect x="376.91" y="355.43" width="0.70" height="24.40" fill="#7C98C2"/>
<rect x="369.50" y="355.43" width="2.20" height="24.40" fill="#CCE8CC"/>
<rect x="371.50" y="355.43" width="2.20" height="24.40" fill="#CCE8CC"/>
<rect x="370.00" y="355.43" width="1.00" height="24.40" fill="#1A4E8C"/>
<rect x="372.00" y="355.43" width="1.00" height="24.40" fill="#2C5C96"/>
<rect x="377.70" y="355.43" width="0.90" height="24.40" fill="#A8D4B0"/>
<rect x="395.50" y="355.43" width="27.20" height="24.40" fill="#88A6B6"/>
<rect x="400.80" y="355.43" width="0.70" height="24.40" fill="#7C98C2"/>
<rect x="402.60" y="355.43" width="0.70" height="24.40" fill="#7C98C2"/>
<rect x="395.50" y="355.43" width="2.20" height="24.40" fill="#CCE8CC"/>
<rect x="397.50" y="355.43" width="2.20" height="24.40" fill="#CCE8CC"/>
<rect x="396.00" y="355.43" width="1.00" height="24.40" fill="#1A4E8C"/>
<rect x="398.00" y="355.43" width="1.00" height="24.40" fill="#2C5C96"/>
<rect x="409.84" y="355.43" width="0.70" height="24.40" fill="#7C98C2"/>
<rect x="411.64" y="355.43" width="0.70" height="24.40" fill="#7C98C2"/>
<rect x="404.50" y="355.43" width="2.20" height="24.40" fill="#CCE8CC"/>
<rect x="406.50" y="355.43" width="2.20" height="24.40" fill="#CCE8CC"/>
<rect x="405.00" y="355.43" width="1.00" height="24.40" fill="#1A4E8C"/>
<rect x="407.00" y="355.43" width="1.00" height="24.40" fill="#2C5C96"/>
<rect x="418.88" y="355.43" width="0.70" height="24.40" fill="#7C98C2"/>
<rect x="420.68" y="355.43" width="0.70" height="24.40" fill="#7C98C2"/>
<rect x="413.50" y="355.43" width="2.20" height="24.40" fill="#CCE8CC"/>
<rect x="415.50" y="355.43" width="2.20" height="24.40" fill="#CCE8CC"/>
<rect x="414.00" y="355.43" width="1.00" height="24.40" fill="#1A4E8C"/>
<rect x="416.00" y="355.43" width="1.00" height="24.40" fill="#2C5C96"/>
<rect x="422.10" y="355.43" width="0.90" height="24.40" fill="#A8D4B0"/>
<rect x="462.10" y="355.43" width="51.10" height="24.40" fill="#88A6B6"/>
<rect x="465.06" y="355.43" width="0.70" height="24.40" fill="#7C98C2"/>
<rect x="466.86" y="355.43" width="0.70" height="24.40" fill="#7C98C2"/>
<rect x="462.10" y="355.43" width="1.60" height="24.40" fill="#CCE8CC"/>
<rect x="462.00" y="355.43" width="1.00" height="24.40" fill="#2C5C96"/>
<rect x="474.10" y="355.43" width="0.70" height="24.40" fill="#7C98C2"/>
<rect x="475.90" y="355.43" width="0.70" height="24.40" fill="#7C98C2"/>
<rect x="468.50" y="355.43" width="2.20" height="24.40" fill="#CCE8CC"/>
<rect x="470.50" y="355.43" width="2.20" height="24.40" fill="#CCE8CC"/>
<rect x="469.00" y="355.43" width="1.00" height="24.40" fill="#1A4E8C"/>
<rect x="471.00" y="355.43" width="1.00" height="24.40" fill="#2C5C96"/>
<rect x="483.14" y="355.43" width="0.70" height="24.40" fill="#7C98C2"/>
<rect x="484.94" y="355.43" width="0.70" height="24.40" fill="#7C98C2"/>
<rect x="477.50" y="355.43" width="2.20" height="24.40" fill="#CCE8CC"/>
<rect x="479.50" y="355.43" width="2.20" height="24.40" fill="#CCE8CC"/>
<rect x="478.00" y="355.43" width="1.00" height="24.40" fill="#1A4E8C"/>
<rect x="480.00" y="355.43" width="1.00" height="24.40" fill="#2C5C96"/>
<rect x="492.18" y="355.43" width="0.70" height="24.40" fill="#7C98C2"/>
<rect x="493.98" y="355.43" width="0.70" height="24.40" fill="#7C98C2"/>
<rect x="486.50" y="355.43" width="2.20" height="24.40" fill="#CCE8CC"/>
<rect x="488.50" y="355.43" width="2.20" height="24.40" fill="#CCE8CC"/>
<rect x="487.00" y="355.43" width="1.00" height="24.40" fill="#1A4E8C"/>
<rect x="489.00" y="355.43" width="1.00" height="24.40" fill="#2C5C96"/>
<rect x="501.22" y="355.43" width="0.70" height="24.40" fill="#7C98C2"/>
<rect x="503.02" y="355.43" width="0.70" height="24.40" fill="#7C98C2"/>
<rect x="495.50" y="355.43" width="2.20" height="24.40" fill="#CCE8CC"/>
<rect x="497.50" y="355.43" width="2.20" height="24.40" fill="#CCE8CC"/>
<rect x="496.00" y="355.43" width="1.00" height="24.40" fill="#1A4E8C"/>
<rect x="498.00" y="355.43" width="1.00" height="24.40" fill="#2C5C96"/>
<rect x="510.26" y="355.43" width="0.70" height="24.40" fill="#7C98C2"/>
<rect x="512.06" y="355.43" width="0.70" height="24.40" fill="#7C98C2"/>
<rect x="504.50" y="355.43" width="2.20" height="24.40" fill="#CCE8CC"/>
<rect x="506.50" y="355.43" width="2.20" height="24.40" fill="#CCE8CC"/>
<rect x="505.00" y="355.43" width="1.00" height="24.40" fill="#1A4E8C"/>
<rect x="507.00" y="355.43" width="1.00" height="24.40" fill="#2C5C96"/>
<rect x="462.00" y="355.43" width="1.00" height="24.40" fill="#2C5C96"/>
<rect x="512.60" y="355.43" width="0.90" height="24.40" fill="#A8D4B0"/>
<rect x="528.20" y="355.43" width="40.20" height="24.40" fill="#88A6B6"/>
<rect x="528.86" y="355.43" width="0.70" height="24.40" fill="#7C98C2"/>
<rect x="536.10" y="355.43" width="0.70" height="24.40" fill="#7C98C2"/>
<rect x="537.90" y="355.43" width="0.70" height="24.40" fill="#7C98C2"/>
<rect x="530.50" y="355.43" width="2.20" height="24.40" fill="#CCE8CC"/>
<rect x="532.50" y="355.43" width="2.20" height="24.40" fill="#CCE8CC"/>
<rect x="531.00" y="355.43" width="1.00" height="24.40" fill="#1A4E8C"/>
<rect x="533.00" y="355.43" width="1.00" height="24.40" fill="#2C5C96"/>
<rect x="545.14" y="355.43" width="0.70" height="24.40" fill="#7C98C2"/>
<rect x="546.94" y="355.43" width="0.70" height="24.40" fill="#7C98C2"/>
<rect x="539.50" y="355.43" width="2.20" height="24.40" fill="#CCE8CC"/>
<rect x="541.50" y="355.43" width="2.20" height="24.40" fill="#CCE8CC"/>
<rect x="540.00" y="355.43" width="1.00" height="24.40" fill="#1A4E8C"/>
<rect x="542.00" y="355.43" width="1.00" height="24.40" fill="#2C5C96"/>
<rect x="554.18" y="355.43" width="0.70" height="24.40" fill="#7C98C2"/>
<rect x="555.98" y="355.43" width="0.70" height="24.40" fill="#7C98C2"/>
<rect x="548.50" y="355.43" width="2.20" height="24.40" fill="#CCE8CC"/>
<rect x="550.50" y="355.43" width="2.20" height="24.40" fill="#CCE8CC"/>
<rect x="549.00" y="355.43" width="1.00" height="24.40" fill="#1A4E8C"/>
<rect x="551.00" y="355.43" width="1.00" height="24.40" fill="#2C5C96"/>
<rect x="563.22" y="355.43" width="0.70" height="24.40" fill="#7C98C2"/>
<rect x="565.02" y="355.43" width="0.70" height="24.40" fill="#7C98C2"/>
<rect x="557.50" y="355.43" width="2.20" height="24.40" fill="#CCE8CC"/>
<rect x="559.50" y="355.43" width="2.20" height="24.40" fill="#CCE8CC"/>
<rect x="558.00" y="355.43" width="1.00" height="24.40" fill="#1A4E8C"/>
<rect x="560.00" y="355.43" width="1.00" height="24.40" fill="#2C5C96"/>
<rect x="566.50" y="355.43" width="1.90" height="24.40" fill="#CCE8CC"/>
<rect x="567.00" y="355.43" width="1.00" height="24.40" fill="#1A4E8C"/>
<rect x="567.80" y="355.43" width="0.90" height="24.40" fill="#A8D4B0"/>
<rect x="594.80" y="355.43" width="42.30" height="24.40" fill="#88A6B6"/>
<rect x="597.86" y="355.43" width="0.70" height="24.40" fill="#7C98C2"/>
<rect x="599.66" y="355.43" width="0.70" height="24.40" fill="#7C98C2"/>
<rect x="594.80" y="355.43" width="1.90" height="24.40" fill="#CCE8CC"/>
<rect x="595.00" y="355.43" width="1.00" height="24.40" fill="#2C5C96"/>
<rect x="606.90" y="355.43" width="0.70" height="24.40" fill="#7C98C2"/>
<rect x="608.70" y="355.43" width="0.70" height="24.40" fill="#7C98C2"/>
<rect x="601.50" y="355.43" width="2.20" height="24.40" fill="#CCE8CC"/>
<rect x="603.50" y="355.43" width="2.20" height="24.40" fill="#CCE8CC"/>
<rect x="602.00" y="355.43" width="1.00" height="24.40" fill="#1A4E8C"/>
<rect x="604.00" y="355.43" width="1.00" height="24.40" fill="#2C5C96"/>
<rect x="615.94" y="355.43" width="0.70" height="24.40" fill="#7C98C2"/>
<rect x="617.74" y="355.43" width="0.70" height="24.40" fill="#7C98C2"/>
<rect x="610.50" y="355.43" width="2.20" height="24.40" fill="#CCE8CC"/>
<rect x="612.50" y="355.43" width="2.20" height="24.40" fill="#CCE8CC"/>
<rect x="611.00" y="355.43" width="1.00" height="24.40" fill="#1A4E8C"/>
<rect x="613.00" y="355.43" width="1.00" height="24.40" fill="#2C5C96"/>
<rect x="624.98" y="355.43" width="0.70" height="24.40" fill="#7C98C2"/>
<rect x="626.78" y="355.43" width="0.70" height="24.40" fill="#7C98C2"/>
<rect x="619.50" y="355.43" width="2.20" height="24.40" fill="#CCE8CC"/>
<rect x="621.50" y="355.43" width="2.20" height="24.40" fill="#CCE8CC"/>
<rect x="620.00" y="355.43" width="1.00" height="24.40" fill="#1A4E8C"/>
<rect x="622.00" y="355.43" width="1.00" height="24.40" fill="#2C5C96"/>
<rect x="634.02" y="355.43" width="0.70" height="24.40" fill="#7C98C2"/>
<rect x="635.82" y="355.43" width="0.70" height="24.40" fill="#7C98C2"/>
<rect x="628.50" y="355.43" width="2.20" height="24.40" fill="#CCE8CC"/>
<rect x="630.50" y="355.43" width="2.20" height="24.40" fill="#CCE8CC"/>
<rect x="629.00" y="355.43" width="1.00" height="24.40" fill="#1A4E8C"/>
<rect x="631.00" y="355.43" width="1.00" height="24.40" fill="#2C5C96"/>
<rect x="595.00" y="355.43" width="1.00" height="24.40" fill="#2C5C96"/>
<rect x="636.50" y="355.43" width="0.90" height="24.40" fill="#A8D4B0"/>
<rect x="661.00" y="355.43" width="40.10" height="24.40" fill="#88A6B6"/>
<rect x="661.76" y="355.43" width="0.70" height="24.40" fill="#7C98C2"/>
<rect x="669.00" y="355.43" width="0.70" height="24.40" fill="#7C98C2"/>
<rect x="670.80" y="355.43" width="0.70" height="24.40" fill="#7C98C2"/>
<rect x="663.50" y="355.43" width="2.20" height="24.40" fill="#CCE8CC"/>
<rect x="665.50" y="355.43" width="2.20" height="24.40" fill="#CCE8CC"/>
<rect x="664.00" y="355.43" width="1.00" height="24.40" fill="#1A4E8C"/>
<rect x="666.00" y="355.43" width="1.00" height="24.40" fill="#2C5C96"/>
<rect x="678.04" y="355.43" width="0.70" height="24.40" fill="#7C98C2"/>
<rect x="679.84" y="355.43" width="0.70" height="24.40" fill="#7C98C2"/>
<rect x="672.50" y="355.43" width="2.20" height="24.40" fill="#CCE8CC"/>
<rect x="674.50" y="355.43" width="2.20" height="24.40" fill="#CCE8CC"/>
<rect x="673.00" y="355.43" width="1.00" height="24.40" fill="#1A4E8C"/>
<rect x="675.00" y="355.43" width="1.00" height="24.40" fill="#2C5C96"/>
<rect x="687.08" y="355.43" width="0.70" height="24.40" fill="#7C98C2"/>
<rect x="688.88" y="355.43" width="0.70" height="24.40" fill="#7C98C2"/>
<rect x="681.50" y="355.43" width="2.20" height="24.40" fill="#CCE8CC"/>
<rect x="683.50" y="355.43" width="2.20" height="24.40" fill="#CCE8CC"/>
<rect x="682.00" y="355.43" width="1.00" height="24.40" fill="#1A4E8C"/>
<rect x="684.00" y="355.43" width="1.00" height="24.40" fill="#2C5C96"/>
<rect x="696.12" y="355.43" width="0.70" height="24.40" fill="#7C98C2"/>
<rect x="697.92" y="355.43" width="0.70" height="24.40" fill="#7C98C2"/>
<rect x="690.50" y="355.43" width="2.20" height="24.40" fill="#CCE8CC"/>
<rect x="692.50" y="355.43" width="2.20" height="24.40" fill="#CCE8CC"/>
<rect x="691.00" y="355.43" width="1.00" height="24.40" fill="#1A4E8C"/>
<rect x="693.00" y="355.43" width="1.00" height="24.40" fill="#2C5C96"/>
<rect x="700.50" y="355.43" width="0.90" height="24.40" fill="#A8D4B0"/>
<rect x="727.80" y="355.43" width="43.00" height="24.40" fill="#88A6B6"/>
<rect x="732.90" y="355.43" width="0.70" height="24.40" fill="#7C98C2"/>
<rect x="734.70" y="355.43" width="0.70" height="24.40" fill="#7C98C2"/>
<rect x="727.80" y="355.43" width="1.90" height="24.40" fill="#CCE8CC"/>
<rect x="729.50" y="355.43" width="2.20" height="24.40" fill="#CCE8CC"/>
<rect x="728.00" y="355.43" width="1.00" height="24.40" fill="#1A4E8C"/>
<rect x="730.00" y="355.43" width="1.00" height="24.40" fill="#2C5C96"/>
<rect x="741.94" y="355.43" width="0.70" height="24.40" fill="#7C98C2"/>
<rect x="743.74" y="355.43" width="0.70" height="24.40" fill="#7C98C2"/>
<rect x="736.50" y="355.43" width="2.20" height="24.40" fill="#CCE8CC"/>
<rect x="738.50" y="355.43" width="2.20" height="24.40" fill="#CCE8CC"/>
<rect x="737.00" y="355.43" width="1.00" height="24.40" fill="#1A4E8C"/>
<rect x="739.00" y="355.43" width="1.00" height="24.40" fill="#2C5C96"/>
<rect x="750.98" y="355.43" width="0.70" height="24.40" fill="#7C98C2"/>
<rect x="752.78" y="355.43" width="0.70" height="24.40" fill="#7C98C2"/>
<rect x="745.50" y="355.43" width="2.20" height="24.40" fill="#CCE8CC"/>
<rect x="747.50" y="355.43" width="2.20" height="24.40" fill="#CCE8CC"/>
<rect x="746.00" y="355.43" width="1.00" height="24.40" fill="#1A4E8C"/>
<rect x="748.00" y="355.43" width="1.00" height="24.40" fill="#2C5C96"/>
<rect x="760.02" y="355.43" width="0.70" height="24.40" fill="#7C98C2"/>
<rect x="761.82" y="355.43" width="0.70" height="24.40" fill="#7C98C2"/>
<rect x="754.50" y="355.43" width="2.20" height="24.40" fill="#CCE8CC"/>
<rect x="756.50" y="355.43" width="2.20" height="24.40" fill="#CCE8CC"/>
<rect x="755.00" y="355.43" width="1.00" height="24.40" fill="#1A4E8C"/>
<rect x="757.00" y="355.43" width="1.00" height="24.40" fill="#2C5C96"/>
<rect x="769.06" y="355.43" width="0.70" height="24.40" fill="#7C98C2"/>
<rect x="763.50" y="355.43" width="2.20" height="24.40" fill="#CCE8CC"/>
<rect x="765.50" y="355.43" width="2.20" height="24.40" fill="#CCE8CC"/>
<rect x="764.00" y="355.43" width="1.00" height="24.40" fill="#1A4E8C"/>
<rect x="766.00" y="355.43" width="1.00" height="24.40" fill="#2C5C96"/>
<rect x="770.20" y="355.43" width="0.90" height="24.40" fill="#A8D4B0"/>
<rect x="794.40" y="355.43" width="1.00" height="24.40" fill="#4068A8"/>
<rect x="801.00" y="155.00" width="2.00" height="243.00" fill="#C8F4C0"/>
<path d="M130.5 154.0 V398.5 H802.5" fill="none" stroke="#222222" stroke-width="1"/>
<rect x="130.00" y="233.93" width="1.00" height="24.40" fill="#9C8440"/>
<rect x="130.00" y="294.68" width="1.30" height="24.40" fill="#10902A"/>
<rect x="130.00" y="355.43" width="1.30" height="24.40" fill="#1C5090"/>
<text x="466.3" y="147.9" text-anchor="middle" font-size="15.8px" font-weight="bold" fill="#222222">State Transitions Of Nodes</text>
<text x="125" y="190.275" text-anchor="end" font-size="14.1px" font-weight="normal" fill="#222222">STA 2437 MHz</text>
<text x="125" y="251.025" text-anchor="end" font-size="14.1px" font-weight="normal" fill="#222222">AP 2437 MHz</text>
<text x="125" y="311.775" text-anchor="end" font-size="14.1px" font-weight="normal" fill="#222222">Peripheral</text>
<text x="125" y="372.525" text-anchor="end" font-size="14.1px" font-weight="normal" fill="#222222">Central</text>
<text x="130.0" y="417.1" text-anchor="middle" font-size="14.1px" font-weight="normal" fill="#222222">0</text>
<text x="196.5" y="417.1" text-anchor="middle" font-size="14.1px" font-weight="normal" fill="#222222">0.02</text>
<text x="262.9" y="417.1" text-anchor="middle" font-size="14.1px" font-weight="normal" fill="#222222">0.04</text>
<text x="329.4" y="417.1" text-anchor="middle" font-size="14.1px" font-weight="normal" fill="#222222">0.06</text>
<text x="395.8" y="417.1" text-anchor="middle" font-size="14.1px" font-weight="normal" fill="#222222">0.08</text>
<text x="462.3" y="417.1" text-anchor="middle" font-size="14.1px" font-weight="normal" fill="#222222">0.1</text>
<text x="528.8" y="417.1" text-anchor="middle" font-size="14.1px" font-weight="normal" fill="#222222">0.12</text>
<text x="595.2" y="417.1" text-anchor="middle" font-size="14.1px" font-weight="normal" fill="#222222">0.14</text>
<text x="661.7" y="417.1" text-anchor="middle" font-size="14.1px" font-weight="normal" fill="#222222">0.16</text>
<text x="728.1" y="417.1" text-anchor="middle" font-size="14.1px" font-weight="normal" fill="#222222">0.18</text>
<text x="794.6" y="417.1" text-anchor="middle" font-size="14.1px" font-weight="normal" fill="#222222">0.2</text>
<text x="466" y="434.8" text-anchor="middle" font-size="15.3px" font-weight="normal" fill="#222222">Time (s)</text>
<text x="828" y="155.6" text-anchor="start" font-size="13.9px" font-weight="bold" fill="#222222">Operating States</text>
<rect x="828.00" y="172.00" width="50.00" height="20.00" fill="#C0C0C0"/>
<rect x="828.5" y="172.5" width="49" height="19" fill="none" stroke="#000" stroke-opacity="0.03"/>
<text x="888" y="186" text-anchor="start" font-size="14px" font-weight="normal" fill="#222222">Sleep</text>
<rect x="828.00" y="202.00" width="50.00" height="20.00" fill="#FFFFFF"/>
<text x="888" y="216" text-anchor="start" font-size="14px" font-weight="normal" fill="#222222">Listen</text>
<rect x="828.00" y="232.00" width="50.00" height="20.00" fill="#10407C"/>
<rect x="828.5" y="232.5" width="49" height="19" fill="none" stroke="#000" stroke-opacity="0.03"/>
<text x="888" y="246" text-anchor="start" font-size="14px" font-weight="normal" fill="#222222">Transmission</text>
<rect x="828.00" y="262.00" width="50.00" height="20.00" fill="#008012"/>
<rect x="828.5" y="262.5" width="49" height="19" fill="none" stroke="#000" stroke-opacity="0.03"/>
<text x="888" y="276" text-anchor="start" font-size="14px" font-weight="normal" fill="#222222">Reception Success</text>
<rect x="828.00" y="292.00" width="50.00" height="20.00" fill="#E01B14"/>
<rect x="828.5" y="292.5" width="49" height="19" fill="none" stroke="#000" stroke-opacity="0.03"/>
<text x="888" y="306" text-anchor="start" font-size="14px" font-weight="normal" fill="#222222">Reception Failure</text>
<rect x="828.00" y="322.00" width="50.00" height="20.00" fill="#C8FFC0"/>
<rect x="828.5" y="322.5" width="49" height="19" fill="none" stroke="#000" stroke-opacity="0.03"/>
<text x="888" y="336" text-anchor="start" font-size="14px" font-weight="normal" fill="#222222">Reception Others</text>
<rect x="828.00" y="352.00" width="50.00" height="20.00" fill="#EDB120"/>
<rect x="828.5" y="352.5" width="49" height="19" fill="none" stroke="#000" stroke-opacity="0.03"/>
<text x="888" y="366" text-anchor="start" font-size="14px" font-weight="normal" fill="#222222">Contention</text>
<circle cx="786.5" cy="142.5" r="1.6" fill="#4D4D4D"/>
<circle cx="792.5" cy="142.5" r="1.6" fill="#4D4D4D"/>
<circle cx="798.5" cy="142.5" r="1.6" fill="#4D4D4D"/>
<rect x="129.00" y="504.00" width="674.00" height="245.00" fill="#FFFFFF"/>
<path d="M130.5 503.0 V747.5 H803" fill="none" stroke="#FFFFFF" stroke-width="3"/>
<path d="M130.5 503.0 V747.5 H803 M130.50 747.5 v-6.5 M196.50 747.5 v-6.5 M262.50 747.5 v-6.5 M329.50 747.5 v-6.5 M395.50 747.5 v-6.5 M462.50 747.5 v-6.5 M528.50 747.5 v-6.5 M595.50 747.5 v-6.5 M661.50 747.5 v-6.5 M728.50 747.5 v-6.5 M794.50 747.5 v-6.5 M130.5 747.50 h6.5 M130.5 698.50 h6.5 M130.5 649.50 h6.5 M130.5 601.50 h6.5 M130.5 552.50 h6.5 M130.5 503.50 h6.5" fill="none" stroke="#222222" stroke-width="1"/>
<rect x="195.90" y="686.90" width="51.50" height="4.88" fill="#5C2194" fill-opacity="0.33"/>
<rect x="200.50" y="686.90" width="2.20" height="4.88" fill="#FFFFFF" fill-opacity="0.5"/>
<rect x="202.50" y="686.90" width="2.20" height="4.88" fill="#FFFFFF" fill-opacity="0.5"/>
<rect x="209.50" y="686.90" width="2.20" height="4.88" fill="#FFFFFF" fill-opacity="0.5"/>
<rect x="211.50" y="686.90" width="2.20" height="4.88" fill="#FFFFFF" fill-opacity="0.5"/>
<rect x="218.50" y="686.90" width="2.20" height="4.88" fill="#FFFFFF" fill-opacity="0.5"/>
<rect x="220.50" y="686.90" width="2.20" height="4.88" fill="#FFFFFF" fill-opacity="0.5"/>
<rect x="227.50" y="686.90" width="2.20" height="4.88" fill="#FFFFFF" fill-opacity="0.5"/>
<rect x="229.50" y="686.90" width="2.20" height="4.88" fill="#FFFFFF" fill-opacity="0.5"/>
<rect x="236.50" y="686.90" width="2.20" height="4.88" fill="#FFFFFF" fill-opacity="0.5"/>
<rect x="238.50" y="686.90" width="2.20" height="4.88" fill="#FFFFFF" fill-opacity="0.5"/>
<rect x="245.50" y="686.90" width="1.90" height="4.88" fill="#FFFFFF" fill-opacity="0.5"/>
<rect x="197.06" y="686.90" width="0.70" height="4.88" fill="#5C2194" fill-opacity="0.12"/>
<rect x="198.86" y="686.90" width="0.70" height="4.88" fill="#5C2194" fill-opacity="0.12"/>
<rect x="201.00" y="686.90" width="1.00" height="4.88" fill="#5C2194" fill-opacity="0.66"/>
<rect x="203.00" y="686.90" width="1.00" height="4.88" fill="#5C2194" fill-opacity="0.48"/>
<rect x="206.10" y="686.90" width="0.70" height="4.88" fill="#5C2194" fill-opacity="0.12"/>
<rect x="207.90" y="686.90" width="0.70" height="4.88" fill="#5C2194" fill-opacity="0.12"/>
<rect x="210.00" y="686.90" width="1.00" height="4.88" fill="#5C2194" fill-opacity="0.66"/>
<rect x="212.00" y="686.90" width="1.00" height="4.88" fill="#5C2194" fill-opacity="0.48"/>
<rect x="215.14" y="686.90" width="0.70" height="4.88" fill="#5C2194" fill-opacity="0.12"/>
<rect x="216.94" y="686.90" width="0.70" height="4.88" fill="#5C2194" fill-opacity="0.12"/>
<rect x="219.00" y="686.90" width="1.00" height="4.88" fill="#5C2194" fill-opacity="0.66"/>
<rect x="221.00" y="686.90" width="1.00" height="4.88" fill="#5C2194" fill-opacity="0.48"/>
<rect x="224.18" y="686.90" width="0.70" height="4.88" fill="#5C2194" fill-opacity="0.12"/>
<rect x="225.98" y="686.90" width="0.70" height="4.88" fill="#5C2194" fill-opacity="0.12"/>
<rect x="228.00" y="686.90" width="1.00" height="4.88" fill="#5C2194" fill-opacity="0.66"/>
<rect x="230.00" y="686.90" width="1.00" height="4.88" fill="#5C2194" fill-opacity="0.48"/>
<rect x="233.22" y="686.90" width="0.70" height="4.88" fill="#5C2194" fill-opacity="0.12"/>
<rect x="235.02" y="686.90" width="0.70" height="4.88" fill="#5C2194" fill-opacity="0.12"/>
<rect x="237.00" y="686.90" width="1.00" height="4.88" fill="#5C2194" fill-opacity="0.66"/>
<rect x="239.00" y="686.90" width="1.00" height="4.88" fill="#5C2194" fill-opacity="0.48"/>
<rect x="242.26" y="686.90" width="0.70" height="4.88" fill="#5C2194" fill-opacity="0.12"/>
<rect x="244.06" y="686.90" width="0.70" height="4.88" fill="#5C2194" fill-opacity="0.12"/>
<rect x="246.00" y="686.90" width="1.00" height="4.88" fill="#5C2194" fill-opacity="0.66"/>
<rect x="262.80" y="657.62" width="51.40" height="4.88" fill="#5C2194" fill-opacity="0.33"/>
<rect x="262.80" y="657.62" width="1.90" height="4.88" fill="#FFFFFF" fill-opacity="0.5"/>
<rect x="264.50" y="657.62" width="2.20" height="4.88" fill="#FFFFFF" fill-opacity="0.5"/>
<rect x="271.50" y="657.62" width="2.20" height="4.88" fill="#FFFFFF" fill-opacity="0.5"/>
<rect x="273.50" y="657.62" width="2.20" height="4.88" fill="#FFFFFF" fill-opacity="0.5"/>
<rect x="280.50" y="657.62" width="2.20" height="4.88" fill="#FFFFFF" fill-opacity="0.5"/>
<rect x="282.50" y="657.62" width="2.20" height="4.88" fill="#FFFFFF" fill-opacity="0.5"/>
<rect x="289.50" y="657.62" width="2.20" height="4.88" fill="#FFFFFF" fill-opacity="0.5"/>
<rect x="291.50" y="657.62" width="2.20" height="4.88" fill="#FFFFFF" fill-opacity="0.5"/>
<rect x="298.50" y="657.62" width="2.20" height="4.88" fill="#FFFFFF" fill-opacity="0.5"/>
<rect x="300.50" y="657.62" width="2.20" height="4.88" fill="#FFFFFF" fill-opacity="0.5"/>
<rect x="307.50" y="657.62" width="2.20" height="4.88" fill="#FFFFFF" fill-opacity="0.5"/>
<rect x="309.50" y="657.62" width="2.20" height="4.88" fill="#FFFFFF" fill-opacity="0.5"/>
<rect x="263.00" y="657.62" width="1.00" height="4.88" fill="#5C2194" fill-opacity="0.66"/>
<rect x="265.00" y="657.62" width="1.00" height="4.88" fill="#5C2194" fill-opacity="0.48"/>
<rect x="267.90" y="657.62" width="0.70" height="4.88" fill="#5C2194" fill-opacity="0.12"/>
<rect x="269.70" y="657.62" width="0.70" height="4.88" fill="#5C2194" fill-opacity="0.12"/>
<rect x="272.00" y="657.62" width="1.00" height="4.88" fill="#5C2194" fill-opacity="0.66"/>
<rect x="274.00" y="657.62" width="1.00" height="4.88" fill="#5C2194" fill-opacity="0.48"/>
<rect x="276.94" y="657.62" width="0.70" height="4.88" fill="#5C2194" fill-opacity="0.12"/>
<rect x="278.74" y="657.62" width="0.70" height="4.88" fill="#5C2194" fill-opacity="0.12"/>
<rect x="281.00" y="657.62" width="1.00" height="4.88" fill="#5C2194" fill-opacity="0.66"/>
<rect x="283.00" y="657.62" width="1.00" height="4.88" fill="#5C2194" fill-opacity="0.48"/>
<rect x="285.98" y="657.62" width="0.70" height="4.88" fill="#5C2194" fill-opacity="0.12"/>
<rect x="287.78" y="657.62" width="0.70" height="4.88" fill="#5C2194" fill-opacity="0.12"/>
<rect x="290.00" y="657.62" width="1.00" height="4.88" fill="#5C2194" fill-opacity="0.66"/>
<rect x="292.00" y="657.62" width="1.00" height="4.88" fill="#5C2194" fill-opacity="0.48"/>
<rect x="295.02" y="657.62" width="0.70" height="4.88" fill="#5C2194" fill-opacity="0.12"/>
<rect x="296.82" y="657.62" width="0.70" height="4.88" fill="#5C2194" fill-opacity="0.12"/>
<rect x="299.00" y="657.62" width="1.00" height="4.88" fill="#5C2194" fill-opacity="0.66"/>
<rect x="301.00" y="657.62" width="1.00" height="4.88" fill="#5C2194" fill-opacity="0.48"/>
<rect x="304.06" y="657.62" width="0.70" height="4.88" fill="#5C2194" fill-opacity="0.12"/>
<rect x="305.86" y="657.62" width="0.70" height="4.88" fill="#5C2194" fill-opacity="0.12"/>
<rect x="308.00" y="657.62" width="1.00" height="4.88" fill="#5C2194" fill-opacity="0.66"/>
<rect x="310.00" y="657.62" width="1.00" height="4.88" fill="#5C2194" fill-opacity="0.48"/>
<rect x="313.10" y="657.62" width="0.70" height="4.88" fill="#5C2194" fill-opacity="0.12"/>
<rect x="329.00" y="633.22" width="49.30" height="4.88" fill="#5C2194" fill-opacity="0.33"/>
<rect x="333.50" y="633.22" width="2.20" height="4.88" fill="#FFFFFF" fill-opacity="0.5"/>
<rect x="335.50" y="633.22" width="2.20" height="4.88" fill="#FFFFFF" fill-opacity="0.5"/>
<rect x="342.50" y="633.22" width="2.20" height="4.88" fill="#FFFFFF" fill-opacity="0.5"/>
<rect x="344.50" y="633.22" width="2.20" height="4.88" fill="#FFFFFF" fill-opacity="0.5"/>
<rect x="351.50" y="633.22" width="2.20" height="4.88" fill="#FFFFFF" fill-opacity="0.5"/>
<rect x="353.50" y="633.22" width="2.20" height="4.88" fill="#FFFFFF" fill-opacity="0.5"/>
<rect x="360.50" y="633.22" width="2.20" height="4.88" fill="#FFFFFF" fill-opacity="0.5"/>
<rect x="362.50" y="633.22" width="2.20" height="4.88" fill="#FFFFFF" fill-opacity="0.5"/>
<rect x="369.50" y="633.22" width="2.20" height="4.88" fill="#FFFFFF" fill-opacity="0.5"/>
<rect x="371.50" y="633.22" width="2.20" height="4.88" fill="#FFFFFF" fill-opacity="0.5"/>
<rect x="329.91" y="633.22" width="0.70" height="4.88" fill="#5C2194" fill-opacity="0.12"/>
<rect x="331.71" y="633.22" width="0.70" height="4.88" fill="#5C2194" fill-opacity="0.12"/>
<rect x="334.00" y="633.22" width="1.00" height="4.88" fill="#5C2194" fill-opacity="0.66"/>
<rect x="336.00" y="633.22" width="1.00" height="4.88" fill="#5C2194" fill-opacity="0.48"/>
<rect x="338.95" y="633.22" width="0.70" height="4.88" fill="#5C2194" fill-opacity="0.12"/>
<rect x="340.75" y="633.22" width="0.70" height="4.88" fill="#5C2194" fill-opacity="0.12"/>
<rect x="343.00" y="633.22" width="1.00" height="4.88" fill="#5C2194" fill-opacity="0.66"/>
<rect x="345.00" y="633.22" width="1.00" height="4.88" fill="#5C2194" fill-opacity="0.48"/>
<rect x="347.99" y="633.22" width="0.70" height="4.88" fill="#5C2194" fill-opacity="0.12"/>
<rect x="349.79" y="633.22" width="0.70" height="4.88" fill="#5C2194" fill-opacity="0.12"/>
<rect x="352.00" y="633.22" width="1.00" height="4.88" fill="#5C2194" fill-opacity="0.66"/>
<rect x="354.00" y="633.22" width="1.00" height="4.88" fill="#5C2194" fill-opacity="0.48"/>
<rect x="357.03" y="633.22" width="0.70" height="4.88" fill="#5C2194" fill-opacity="0.12"/>
<rect x="358.83" y="633.22" width="0.70" height="4.88" fill="#5C2194" fill-opacity="0.12"/>
<rect x="361.00" y="633.22" width="1.00" height="4.88" fill="#5C2194" fill-opacity="0.66"/>
<rect x="363.00" y="633.22" width="1.00" height="4.88" fill="#5C2194" fill-opacity="0.48"/>
<rect x="366.07" y="633.22" width="0.70" height="4.88" fill="#5C2194" fill-opacity="0.12"/>
<rect x="367.87" y="633.22" width="0.70" height="4.88" fill="#5C2194" fill-opacity="0.12"/>
<rect x="370.00" y="633.22" width="1.00" height="4.88" fill="#5C2194" fill-opacity="0.66"/>
<rect x="372.00" y="633.22" width="1.00" height="4.88" fill="#5C2194" fill-opacity="0.48"/>
<rect x="375.11" y="633.22" width="0.70" height="4.88" fill="#5C2194" fill-opacity="0.12"/>
<rect x="376.91" y="633.22" width="0.70" height="4.88" fill="#5C2194" fill-opacity="0.12"/>
<rect x="395.50" y="608.82" width="27.20" height="4.88" fill="#5C2194" fill-opacity="0.33"/>
<rect x="395.50" y="608.82" width="2.20" height="4.88" fill="#FFFFFF" fill-opacity="0.5"/>
<rect x="397.50" y="608.82" width="2.20" height="4.88" fill="#FFFFFF" fill-opacity="0.5"/>
<rect x="404.50" y="608.82" width="2.20" height="4.88" fill="#FFFFFF" fill-opacity="0.5"/>
<rect x="406.50" y="608.82" width="2.20" height="4.88" fill="#FFFFFF" fill-opacity="0.5"/>
<rect x="413.50" y="608.82" width="2.20" height="4.88" fill="#FFFFFF" fill-opacity="0.5"/>
<rect x="415.50" y="608.82" width="2.20" height="4.88" fill="#FFFFFF" fill-opacity="0.5"/>
<rect x="396.00" y="608.82" width="1.00" height="4.88" fill="#5C2194" fill-opacity="0.66"/>
<rect x="398.00" y="608.82" width="1.00" height="4.88" fill="#5C2194" fill-opacity="0.48"/>
<rect x="400.80" y="608.82" width="0.70" height="4.88" fill="#5C2194" fill-opacity="0.12"/>
<rect x="402.60" y="608.82" width="0.70" height="4.88" fill="#5C2194" fill-opacity="0.12"/>
<rect x="405.00" y="608.82" width="1.00" height="4.88" fill="#5C2194" fill-opacity="0.66"/>
<rect x="407.00" y="608.82" width="1.00" height="4.88" fill="#5C2194" fill-opacity="0.48"/>
<rect x="409.84" y="608.82" width="0.70" height="4.88" fill="#5C2194" fill-opacity="0.12"/>
<rect x="411.64" y="608.82" width="0.70" height="4.88" fill="#5C2194" fill-opacity="0.12"/>
<rect x="414.00" y="608.82" width="1.00" height="4.88" fill="#5C2194" fill-opacity="0.66"/>
<rect x="416.00" y="608.82" width="1.00" height="4.88" fill="#5C2194" fill-opacity="0.48"/>
<rect x="418.88" y="608.82" width="0.70" height="4.88" fill="#5C2194" fill-opacity="0.12"/>
<rect x="420.68" y="608.82" width="0.70" height="4.88" fill="#5C2194" fill-opacity="0.12"/>
<rect x="462.10" y="584.42" width="51.10" height="4.88" fill="#5C2194" fill-opacity="0.33"/>
<rect x="462.10" y="584.42" width="1.60" height="4.88" fill="#FFFFFF" fill-opacity="0.5"/>
<rect x="468.50" y="584.42" width="2.20" height="4.88" fill="#FFFFFF" fill-opacity="0.5"/>
<rect x="470.50" y="584.42" width="2.20" height="4.88" fill="#FFFFFF" fill-opacity="0.5"/>
<rect x="477.50" y="584.42" width="2.20" height="4.88" fill="#FFFFFF" fill-opacity="0.5"/>
<rect x="479.50" y="584.42" width="2.20" height="4.88" fill="#FFFFFF" fill-opacity="0.5"/>
<rect x="486.50" y="584.42" width="2.20" height="4.88" fill="#FFFFFF" fill-opacity="0.5"/>
<rect x="488.50" y="584.42" width="2.20" height="4.88" fill="#FFFFFF" fill-opacity="0.5"/>
<rect x="495.50" y="584.42" width="2.20" height="4.88" fill="#FFFFFF" fill-opacity="0.5"/>
<rect x="497.50" y="584.42" width="2.20" height="4.88" fill="#FFFFFF" fill-opacity="0.5"/>
<rect x="504.50" y="584.42" width="2.20" height="4.88" fill="#FFFFFF" fill-opacity="0.5"/>
<rect x="506.50" y="584.42" width="2.20" height="4.88" fill="#FFFFFF" fill-opacity="0.5"/>
<rect x="462.00" y="584.42" width="1.00" height="4.88" fill="#5C2194" fill-opacity="0.48"/>
<rect x="465.06" y="584.42" width="0.70" height="4.88" fill="#5C2194" fill-opacity="0.12"/>
<rect x="466.86" y="584.42" width="0.70" height="4.88" fill="#5C2194" fill-opacity="0.12"/>
<rect x="469.00" y="584.42" width="1.00" height="4.88" fill="#5C2194" fill-opacity="0.66"/>
<rect x="471.00" y="584.42" width="1.00" height="4.88" fill="#5C2194" fill-opacity="0.48"/>
<rect x="474.10" y="584.42" width="0.70" height="4.88" fill="#5C2194" fill-opacity="0.12"/>
<rect x="475.90" y="584.42" width="0.70" height="4.88" fill="#5C2194" fill-opacity="0.12"/>
<rect x="478.00" y="584.42" width="1.00" height="4.88" fill="#5C2194" fill-opacity="0.66"/>
<rect x="480.00" y="584.42" width="1.00" height="4.88" fill="#5C2194" fill-opacity="0.48"/>
<rect x="483.14" y="584.42" width="0.70" height="4.88" fill="#5C2194" fill-opacity="0.12"/>
<rect x="484.94" y="584.42" width="0.70" height="4.88" fill="#5C2194" fill-opacity="0.12"/>
<rect x="487.00" y="584.42" width="1.00" height="4.88" fill="#5C2194" fill-opacity="0.66"/>
<rect x="489.00" y="584.42" width="1.00" height="4.88" fill="#5C2194" fill-opacity="0.48"/>
<rect x="492.18" y="584.42" width="0.70" height="4.88" fill="#5C2194" fill-opacity="0.12"/>
<rect x="493.98" y="584.42" width="0.70" height="4.88" fill="#5C2194" fill-opacity="0.12"/>
<rect x="496.00" y="584.42" width="1.00" height="4.88" fill="#5C2194" fill-opacity="0.66"/>
<rect x="498.00" y="584.42" width="1.00" height="4.88" fill="#5C2194" fill-opacity="0.48"/>
<rect x="501.22" y="584.42" width="0.70" height="4.88" fill="#5C2194" fill-opacity="0.12"/>
<rect x="503.02" y="584.42" width="0.70" height="4.88" fill="#5C2194" fill-opacity="0.12"/>
<rect x="505.00" y="584.42" width="1.00" height="4.88" fill="#5C2194" fill-opacity="0.66"/>
<rect x="507.00" y="584.42" width="1.00" height="4.88" fill="#5C2194" fill-opacity="0.48"/>
<rect x="510.26" y="584.42" width="0.70" height="4.88" fill="#5C2194" fill-opacity="0.12"/>
<rect x="512.06" y="584.42" width="0.70" height="4.88" fill="#5C2194" fill-opacity="0.12"/>
<rect x="462.00" y="584.42" width="1.00" height="4.88" fill="#5C2194" fill-opacity="0.5"/>
<rect x="528.20" y="560.02" width="40.20" height="4.88" fill="#5C2194" fill-opacity="0.33"/>
<rect x="530.50" y="560.02" width="2.20" height="4.88" fill="#FFFFFF" fill-opacity="0.5"/>
<rect x="532.50" y="560.02" width="2.20" height="4.88" fill="#FFFFFF" fill-opacity="0.5"/>
<rect x="539.50" y="560.02" width="2.20" height="4.88" fill="#FFFFFF" fill-opacity="0.5"/>
<rect x="541.50" y="560.02" width="2.20" height="4.88" fill="#FFFFFF" fill-opacity="0.5"/>
<rect x="548.50" y="560.02" width="2.20" height="4.88" fill="#FFFFFF" fill-opacity="0.5"/>
<rect x="550.50" y="560.02" width="2.20" height="4.88" fill="#FFFFFF" fill-opacity="0.5"/>
<rect x="557.50" y="560.02" width="2.20" height="4.88" fill="#FFFFFF" fill-opacity="0.5"/>
<rect x="559.50" y="560.02" width="2.20" height="4.88" fill="#FFFFFF" fill-opacity="0.5"/>
<rect x="566.50" y="560.02" width="1.90" height="4.88" fill="#FFFFFF" fill-opacity="0.5"/>
<rect x="528.86" y="560.02" width="0.70" height="4.88" fill="#5C2194" fill-opacity="0.12"/>
<rect x="531.00" y="560.02" width="1.00" height="4.88" fill="#5C2194" fill-opacity="0.66"/>
<rect x="533.00" y="560.02" width="1.00" height="4.88" fill="#5C2194" fill-opacity="0.48"/>
<rect x="536.10" y="560.02" width="0.70" height="4.88" fill="#5C2194" fill-opacity="0.12"/>
<rect x="537.90" y="560.02" width="0.70" height="4.88" fill="#5C2194" fill-opacity="0.12"/>
<rect x="540.00" y="560.02" width="1.00" height="4.88" fill="#5C2194" fill-opacity="0.66"/>
<rect x="542.00" y="560.02" width="1.00" height="4.88" fill="#5C2194" fill-opacity="0.48"/>
<rect x="545.14" y="560.02" width="0.70" height="4.88" fill="#5C2194" fill-opacity="0.12"/>
<rect x="546.94" y="560.02" width="0.70" height="4.88" fill="#5C2194" fill-opacity="0.12"/>
<rect x="549.00" y="560.02" width="1.00" height="4.88" fill="#5C2194" fill-opacity="0.66"/>
<rect x="551.00" y="560.02" width="1.00" height="4.88" fill="#5C2194" fill-opacity="0.48"/>
<rect x="554.18" y="560.02" width="0.70" height="4.88" fill="#5C2194" fill-opacity="0.12"/>
<rect x="555.98" y="560.02" width="0.70" height="4.88" fill="#5C2194" fill-opacity="0.12"/>
<rect x="558.00" y="560.02" width="1.00" height="4.88" fill="#5C2194" fill-opacity="0.66"/>
<rect x="560.00" y="560.02" width="1.00" height="4.88" fill="#5C2194" fill-opacity="0.48"/>
<rect x="563.22" y="560.02" width="0.70" height="4.88" fill="#5C2194" fill-opacity="0.12"/>
<rect x="565.02" y="560.02" width="0.70" height="4.88" fill="#5C2194" fill-opacity="0.12"/>
<rect x="567.00" y="560.02" width="1.00" height="4.88" fill="#5C2194" fill-opacity="0.66"/>
<rect x="594.80" y="721.06" width="42.30" height="4.88" fill="#5C2194" fill-opacity="0.33"/>
<rect x="594.80" y="721.06" width="1.90" height="4.88" fill="#FFFFFF" fill-opacity="0.5"/>
<rect x="601.50" y="721.06" width="2.20" height="4.88" fill="#FFFFFF" fill-opacity="0.5"/>
<rect x="603.50" y="721.06" width="2.20" height="4.88" fill="#FFFFFF" fill-opacity="0.5"/>
<rect x="610.50" y="721.06" width="2.20" height="4.88" fill="#FFFFFF" fill-opacity="0.5"/>
<rect x="612.50" y="721.06" width="2.20" height="4.88" fill="#FFFFFF" fill-opacity="0.5"/>
<rect x="619.50" y="721.06" width="2.20" height="4.88" fill="#FFFFFF" fill-opacity="0.5"/>
<rect x="621.50" y="721.06" width="2.20" height="4.88" fill="#FFFFFF" fill-opacity="0.5"/>
<rect x="628.50" y="721.06" width="2.20" height="4.88" fill="#FFFFFF" fill-opacity="0.5"/>
<rect x="630.50" y="721.06" width="2.20" height="4.88" fill="#FFFFFF" fill-opacity="0.5"/>
<rect x="595.00" y="721.06" width="1.00" height="4.88" fill="#5C2194" fill-opacity="0.48"/>
<rect x="597.86" y="721.06" width="0.70" height="4.88" fill="#5C2194" fill-opacity="0.12"/>
<rect x="599.66" y="721.06" width="0.70" height="4.88" fill="#5C2194" fill-opacity="0.12"/>
<rect x="602.00" y="721.06" width="1.00" height="4.88" fill="#5C2194" fill-opacity="0.66"/>
<rect x="604.00" y="721.06" width="1.00" height="4.88" fill="#5C2194" fill-opacity="0.48"/>
<rect x="606.90" y="721.06" width="0.70" height="4.88" fill="#5C2194" fill-opacity="0.12"/>
<rect x="608.70" y="721.06" width="0.70" height="4.88" fill="#5C2194" fill-opacity="0.12"/>
<rect x="611.00" y="721.06" width="1.00" height="4.88" fill="#5C2194" fill-opacity="0.66"/>
<rect x="613.00" y="721.06" width="1.00" height="4.88" fill="#5C2194" fill-opacity="0.48"/>
<rect x="615.94" y="721.06" width="0.70" height="4.88" fill="#5C2194" fill-opacity="0.12"/>
<rect x="617.74" y="721.06" width="0.70" height="4.88" fill="#5C2194" fill-opacity="0.12"/>
<rect x="620.00" y="721.06" width="1.00" height="4.88" fill="#5C2194" fill-opacity="0.66"/>
<rect x="622.00" y="721.06" width="1.00" height="4.88" fill="#5C2194" fill-opacity="0.48"/>
<rect x="624.98" y="721.06" width="0.70" height="4.88" fill="#5C2194" fill-opacity="0.12"/>
<rect x="626.78" y="721.06" width="0.70" height="4.88" fill="#5C2194" fill-opacity="0.12"/>
<rect x="629.00" y="721.06" width="1.00" height="4.88" fill="#5C2194" fill-opacity="0.66"/>
<rect x="631.00" y="721.06" width="1.00" height="4.88" fill="#5C2194" fill-opacity="0.48"/>
<rect x="634.02" y="721.06" width="0.70" height="4.88" fill="#5C2194" fill-opacity="0.12"/>
<rect x="635.82" y="721.06" width="0.70" height="4.88" fill="#5C2194" fill-opacity="0.12"/>
<rect x="594.00" y="721.06" width="1.00" height="4.88" fill="#5C2194" fill-opacity="0.5"/>
<rect x="661.00" y="696.66" width="40.10" height="4.88" fill="#5C2194" fill-opacity="0.33"/>
<rect x="663.50" y="696.66" width="2.20" height="4.88" fill="#FFFFFF" fill-opacity="0.5"/>
<rect x="665.50" y="696.66" width="2.20" height="4.88" fill="#FFFFFF" fill-opacity="0.5"/>
<rect x="672.50" y="696.66" width="2.20" height="4.88" fill="#FFFFFF" fill-opacity="0.5"/>
<rect x="674.50" y="696.66" width="2.20" height="4.88" fill="#FFFFFF" fill-opacity="0.5"/>
<rect x="681.50" y="696.66" width="2.20" height="4.88" fill="#FFFFFF" fill-opacity="0.5"/>
<rect x="683.50" y="696.66" width="2.20" height="4.88" fill="#FFFFFF" fill-opacity="0.5"/>
<rect x="690.50" y="696.66" width="2.20" height="4.88" fill="#FFFFFF" fill-opacity="0.5"/>
<rect x="692.50" y="696.66" width="2.20" height="4.88" fill="#FFFFFF" fill-opacity="0.5"/>
<rect x="661.76" y="696.66" width="0.70" height="4.88" fill="#5C2194" fill-opacity="0.12"/>
<rect x="664.00" y="696.66" width="1.00" height="4.88" fill="#5C2194" fill-opacity="0.66"/>
<rect x="666.00" y="696.66" width="1.00" height="4.88" fill="#5C2194" fill-opacity="0.48"/>
<rect x="669.00" y="696.66" width="0.70" height="4.88" fill="#5C2194" fill-opacity="0.12"/>
<rect x="670.80" y="696.66" width="0.70" height="4.88" fill="#5C2194" fill-opacity="0.12"/>
<rect x="673.00" y="696.66" width="1.00" height="4.88" fill="#5C2194" fill-opacity="0.66"/>
<rect x="675.00" y="696.66" width="1.00" height="4.88" fill="#5C2194" fill-opacity="0.48"/>
<rect x="678.04" y="696.66" width="0.70" height="4.88" fill="#5C2194" fill-opacity="0.12"/>
<rect x="679.84" y="696.66" width="0.70" height="4.88" fill="#5C2194" fill-opacity="0.12"/>
<rect x="682.00" y="696.66" width="1.00" height="4.88" fill="#5C2194" fill-opacity="0.66"/>
<rect x="684.00" y="696.66" width="1.00" height="4.88" fill="#5C2194" fill-opacity="0.48"/>
<rect x="687.08" y="696.66" width="0.70" height="4.88" fill="#5C2194" fill-opacity="0.12"/>
<rect x="688.88" y="696.66" width="0.70" height="4.88" fill="#5C2194" fill-opacity="0.12"/>
<rect x="691.00" y="696.66" width="1.00" height="4.88" fill="#5C2194" fill-opacity="0.66"/>
<rect x="693.00" y="696.66" width="1.00" height="4.88" fill="#5C2194" fill-opacity="0.48"/>
<rect x="696.12" y="696.66" width="0.70" height="4.88" fill="#5C2194" fill-opacity="0.12"/>
<rect x="697.92" y="696.66" width="0.70" height="4.88" fill="#5C2194" fill-opacity="0.12"/>
<rect x="727.80" y="667.38" width="43.00" height="4.88" fill="#5C2194" fill-opacity="0.33"/>
<rect x="727.80" y="667.38" width="1.90" height="4.88" fill="#FFFFFF" fill-opacity="0.5"/>
<rect x="729.50" y="667.38" width="2.20" height="4.88" fill="#FFFFFF" fill-opacity="0.5"/>
<rect x="736.50" y="667.38" width="2.20" height="4.88" fill="#FFFFFF" fill-opacity="0.5"/>
<rect x="738.50" y="667.38" width="2.20" height="4.88" fill="#FFFFFF" fill-opacity="0.5"/>
<rect x="745.50" y="667.38" width="2.20" height="4.88" fill="#FFFFFF" fill-opacity="0.5"/>
<rect x="747.50" y="667.38" width="2.20" height="4.88" fill="#FFFFFF" fill-opacity="0.5"/>
<rect x="754.50" y="667.38" width="2.20" height="4.88" fill="#FFFFFF" fill-opacity="0.5"/>
<rect x="756.50" y="667.38" width="2.20" height="4.88" fill="#FFFFFF" fill-opacity="0.5"/>
<rect x="763.50" y="667.38" width="2.20" height="4.88" fill="#FFFFFF" fill-opacity="0.5"/>
<rect x="765.50" y="667.38" width="2.20" height="4.88" fill="#FFFFFF" fill-opacity="0.5"/>
<rect x="728.00" y="667.38" width="1.00" height="4.88" fill="#5C2194" fill-opacity="0.66"/>
<rect x="730.00" y="667.38" width="1.00" height="4.88" fill="#5C2194" fill-opacity="0.48"/>
<rect x="732.90" y="667.38" width="0.70" height="4.88" fill="#5C2194" fill-opacity="0.12"/>
<rect x="734.70" y="667.38" width="0.70" height="4.88" fill="#5C2194" fill-opacity="0.12"/>
<rect x="737.00" y="667.38" width="1.00" height="4.88" fill="#5C2194" fill-opacity="0.66"/>
<rect x="739.00" y="667.38" width="1.00" height="4.88" fill="#5C2194" fill-opacity="0.48"/>
<rect x="741.94" y="667.38" width="0.70" height="4.88" fill="#5C2194" fill-opacity="0.12"/>
<rect x="743.74" y="667.38" width="0.70" height="4.88" fill="#5C2194" fill-opacity="0.12"/>
<rect x="746.00" y="667.38" width="1.00" height="4.88" fill="#5C2194" fill-opacity="0.66"/>
<rect x="748.00" y="667.38" width="1.00" height="4.88" fill="#5C2194" fill-opacity="0.48"/>
<rect x="750.98" y="667.38" width="0.70" height="4.88" fill="#5C2194" fill-opacity="0.12"/>
<rect x="752.78" y="667.38" width="0.70" height="4.88" fill="#5C2194" fill-opacity="0.12"/>
<rect x="755.00" y="667.38" width="1.00" height="4.88" fill="#5C2194" fill-opacity="0.66"/>
<rect x="757.00" y="667.38" width="1.00" height="4.88" fill="#5C2194" fill-opacity="0.48"/>
<rect x="760.02" y="667.38" width="0.70" height="4.88" fill="#5C2194" fill-opacity="0.12"/>
<rect x="761.82" y="667.38" width="0.70" height="4.88" fill="#5C2194" fill-opacity="0.12"/>
<rect x="764.00" y="667.38" width="1.00" height="4.88" fill="#5C2194" fill-opacity="0.66"/>
<rect x="766.00" y="667.38" width="1.00" height="4.88" fill="#5C2194" fill-opacity="0.48"/>
<rect x="769.06" y="667.38" width="0.70" height="4.88" fill="#5C2194" fill-opacity="0.12"/>
<rect x="794.00" y="642.88" width="1.70" height="4.88" fill="#5C2194" fill-opacity="0.3"/>
<rect x="131.00" y="632.82" width="142.60" height="48.80" fill="#FFD60A" fill-opacity="0.62"/>
<rect x="147.89" y="632.82" width="1.00" height="48.80" fill="#FFFFFF" fill-opacity="0.3"/>
<rect x="165.78" y="632.82" width="1.00" height="48.80" fill="#FFFFFF" fill-opacity="0.3"/>
<rect x="183.66" y="632.82" width="1.00" height="48.80" fill="#FFFFFF" fill-opacity="0.3"/>
<rect x="201.55" y="632.82" width="1.00" height="48.80" fill="#FFFFFF" fill-opacity="0.3"/>
<rect x="219.44" y="632.82" width="1.00" height="48.80" fill="#FFFFFF" fill-opacity="0.3"/>
<rect x="237.32" y="632.82" width="1.00" height="48.80" fill="#FFFFFF" fill-opacity="0.3"/>
<rect x="255.21" y="632.82" width="1.00" height="48.80" fill="#FFFFFF" fill-opacity="0.3"/>
<rect x="321.60" y="632.82" width="35.50" height="48.80" fill="#FFD60A" fill-opacity="0.62"/>
<rect x="339.00" y="632.82" width="1.00" height="48.80" fill="#FFFFFF" fill-opacity="0.3"/>
<rect x="379.60" y="632.82" width="360.40" height="48.80" fill="#FFD60A" fill-opacity="0.62"/>
<rect x="397.15" y="632.82" width="1.00" height="48.80" fill="#FFFFFF" fill-opacity="0.3"/>
<rect x="415.20" y="632.82" width="1.00" height="48.80" fill="#FFFFFF" fill-opacity="0.3"/>
<rect x="433.25" y="632.82" width="1.00" height="48.80" fill="#FFFFFF" fill-opacity="0.3"/>
<rect x="451.30" y="632.82" width="1.00" height="48.80" fill="#FFFFFF" fill-opacity="0.3"/>
<rect x="469.35" y="632.82" width="1.00" height="48.80" fill="#FFFFFF" fill-opacity="0.3"/>
<rect x="487.40" y="632.82" width="1.00" height="48.80" fill="#FFFFFF" fill-opacity="0.3"/>
<rect x="505.45" y="632.82" width="1.00" height="48.80" fill="#FFFFFF" fill-opacity="0.3"/>
<rect x="523.50" y="632.82" width="1.00" height="48.80" fill="#FFFFFF" fill-opacity="0.3"/>
<rect x="541.55" y="632.82" width="1.00" height="48.80" fill="#FFFFFF" fill-opacity="0.3"/>
<rect x="559.60" y="632.82" width="1.00" height="48.80" fill="#FFFFFF" fill-opacity="0.3"/>
<rect x="577.65" y="632.82" width="1.00" height="48.80" fill="#FFFFFF" fill-opacity="0.3"/>
<rect x="595.70" y="632.82" width="1.00" height="48.80" fill="#FFFFFF" fill-opacity="0.3"/>
<rect x="613.75" y="632.82" width="1.00" height="48.80" fill="#FFFFFF" fill-opacity="0.3"/>
<rect x="631.80" y="632.82" width="1.00" height="48.80" fill="#FFFFFF" fill-opacity="0.3"/>
<rect x="649.85" y="632.82" width="1.00" height="48.80" fill="#FFFFFF" fill-opacity="0.3"/>
<rect x="667.90" y="632.82" width="1.00" height="48.80" fill="#FFFFFF" fill-opacity="0.3"/>
<rect x="685.95" y="632.82" width="1.00" height="48.80" fill="#FFFFFF" fill-opacity="0.3"/>
<rect x="704.00" y="632.82" width="1.00" height="48.80" fill="#FFFFFF" fill-opacity="0.3"/>
<rect x="722.05" y="632.82" width="1.00" height="48.80" fill="#FFFFFF" fill-opacity="0.3"/>
<rect x="785.00" y="632.82" width="16.00" height="48.80" fill="#FFD60A" fill-opacity="0.42"/>
<rect x="277.10" y="632.82" width="0.80" height="48.80" fill="#FFD60A" fill-opacity="0.3"/>
<rect x="283.80" y="632.82" width="0.80" height="48.80" fill="#FFD60A" fill-opacity="0.3"/>
<rect x="304.90" y="632.82" width="0.80" height="48.80" fill="#FFD60A" fill-opacity="0.3"/>
<rect x="310.00" y="632.82" width="0.80" height="48.80" fill="#FFD60A" fill-opacity="0.3"/>
<rect x="360.20" y="632.82" width="0.80" height="48.80" fill="#FFD60A" fill-opacity="0.3"/>
<rect x="368.70" y="632.82" width="0.80" height="48.80" fill="#FFD60A" fill-opacity="0.3"/>
<rect x="741.00" y="632.82" width="0.80" height="48.80" fill="#FFD60A" fill-opacity="0.3"/>
<rect x="748.10" y="632.82" width="0.80" height="48.80" fill="#FFD60A" fill-opacity="0.3"/>
<rect x="761.10" y="632.82" width="0.80" height="48.80" fill="#FFD60A" fill-opacity="0.3"/>
<rect x="766.10" y="632.82" width="0.80" height="48.80" fill="#FFD60A" fill-opacity="0.3"/>
<rect x="130.60" y="710.90" width="0.80" height="4.88" fill="#B090D0"/>
<rect x="801.00" y="504.00" width="2.00" height="243.50" fill="#C8F4C0"/>
<text x="466.3" y="496.9" text-anchor="middle" font-size="15.9px" font-weight="bold" fill="#222222">Channel Occupancy</text>
<text x="125" y="753.3" text-anchor="end" font-size="14.1px" font-weight="normal" fill="#222222">2400</text>
<text x="125" y="704.5" text-anchor="end" font-size="14.1px" font-weight="normal" fill="#222222">2420</text>
<text x="125" y="655.6999999999999" text-anchor="end" font-size="14.1px" font-weight="normal" fill="#222222">2440</text>
<text x="125" y="606.9" text-anchor="end" font-size="14.1px" font-weight="normal" fill="#222222">2460</text>
<text x="125" y="558.0999999999999" text-anchor="end" font-size="14.1px" font-weight="normal" fill="#222222">2480</text>
<text x="125" y="509.3" text-anchor="end" font-size="14.1px" font-weight="normal" fill="#222222">2500</text>
<text x="130.0" y="766.1" text-anchor="middle" font-size="14.1px" font-weight="normal" fill="#222222">0</text>
<text x="196.5" y="766.1" text-anchor="middle" font-size="14.1px" font-weight="normal" fill="#222222">0.02</text>
<text x="262.9" y="766.1" text-anchor="middle" font-size="14.1px" font-weight="normal" fill="#222222">0.04</text>
<text x="329.4" y="766.1" text-anchor="middle" font-size="14.1px" font-weight="normal" fill="#222222">0.06</text>
<text x="395.8" y="766.1" text-anchor="middle" font-size="14.1px" font-weight="normal" fill="#222222">0.08</text>
<text x="462.3" y="766.1" text-anchor="middle" font-size="14.1px" font-weight="normal" fill="#222222">0.1</text>
<text x="528.8" y="766.1" text-anchor="middle" font-size="14.1px" font-weight="normal" fill="#222222">0.12</text>
<text x="595.2" y="766.1" text-anchor="middle" font-size="14.1px" font-weight="normal" fill="#222222">0.14</text>
<text x="661.7" y="766.1" text-anchor="middle" font-size="14.1px" font-weight="normal" fill="#222222">0.16</text>
<text x="728.1" y="766.1" text-anchor="middle" font-size="14.1px" font-weight="normal" fill="#222222">0.18</text>
<text x="794.6" y="766.1" text-anchor="middle" font-size="14.1px" font-weight="normal" fill="#222222">0.2</text>
<text x="466" y="783.8" text-anchor="middle" font-size="15.3px" font-weight="normal" fill="#222222">Time (s)</text>
<text transform="translate(85.6,625.9) rotate(-90)" text-anchor="middle" font-size="15.3px" fill="#222222">Frequency (MHz)</text>
<text x="828" y="506" text-anchor="start" font-size="13.9px" font-weight="bold" fill="#222222">Node Types</text>
<rect x="828.00" y="521.00" width="50.00" height="20.00" fill="#5C2194"/>
<rect x="828.5" y="521.5" width="49" height="19" fill="none" stroke="#000" stroke-opacity="0.03"/>
<text x="888" y="535.6" text-anchor="start" font-size="14px" font-weight="normal" fill="#222222">Bluetooth LE</text>
<rect x="828.00" y="551.00" width="50.00" height="20.00" fill="#FFD60A"/>
<rect x="828.5" y="551.5" width="49" height="19" fill="none" stroke="#000" stroke-opacity="0.03"/>
<text x="888" y="565.6" text-anchor="start" font-size="14px" font-weight="normal" fill="#222222">WLAN</text>
<circle cx="786" cy="492.3" r="1.6" fill="#4D4D4D"/>
<circle cx="792.2" cy="492.3" r="1.6" fill="#4D4D4D"/>
<circle cx="798.5" cy="492.3" r="1.6" fill="#4D4D4D"/>
</svg>
</div>
</body></html>
